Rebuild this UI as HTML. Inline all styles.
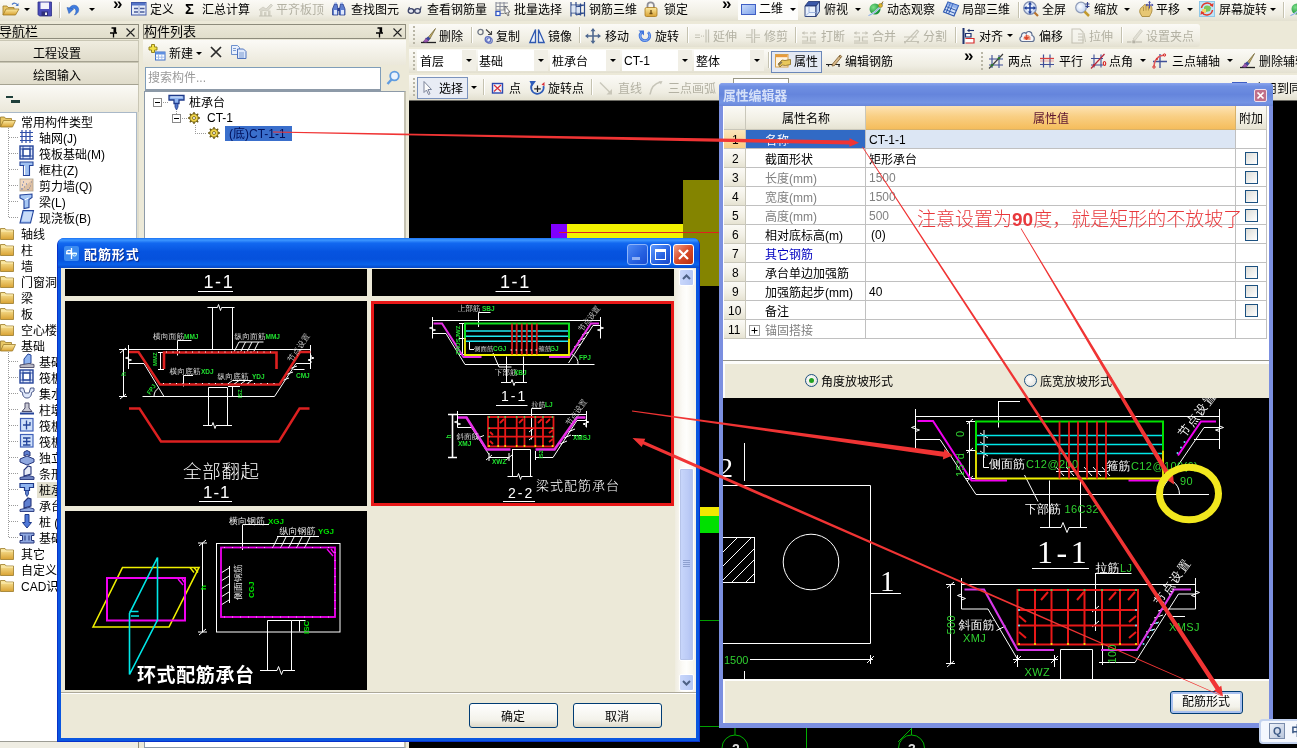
<!DOCTYPE html>
<html lang="zh-CN">
<head>
<meta charset="utf-8">
<title>配筋形式 - 属性编辑器</title>
<style>
*{box-sizing:border-box;margin:0;padding:0}
html,body{width:1297px;height:748px;overflow:hidden}
body{will-change:transform;position:relative;background:#ece9d8;font-family:"Liberation Sans","Noto Sans CJK SC","WenQuanYi Zen Hei",sans-serif;font-size:12px;color:#000;line-height:12px}
.a{position:absolute}
.t{position:absolute;white-space:nowrap;font-size:12px;line-height:14px;height:14px;color:#000}
.g{color:#b3b1a3}
.b{font-weight:bold;font-size:17px;font-family:"Liberation Sans",sans-serif}
.sig{font-weight:bold;font-size:15px;font-family:"Liberation Sans",sans-serif}
.ttl{font-family:"Liberation Sans","Noto Sans CJK SC","WenQuanYi Zen Hei",sans-serif;font-weight:bold}
.ic{position:absolute}
.dd{position:absolute;width:0;height:0;border-left:3px solid transparent;border-right:3px solid transparent;border-top:3px solid #000}
.sep{position:absolute;width:1px;height:16px;background:#c5c2b0;border-right:1px solid #fff;box-sizing:content-box}
.grip{position:absolute;width:3px;height:18px;background-image:radial-gradient(circle at 1px 1px,#b9b6a6 1px,transparent 1.3px);background-size:3px 4px}
.tb{position:absolute;left:0;width:1297px;background:linear-gradient(#fbfaf6,#efede2 70%,#e3e0d0)}
svg{position:absolute;overflow:visible}
.cad{font-family:"Liberation Sans","WenQuanYi Zen Hei","Noto Sans CJK SC",sans-serif}
</style>
</head>
<body>
<svg width="0" height="0" style="position:absolute"><defs>
<linearGradient id="gy" x1="0" y1="0" x2="0" y2="1"><stop offset="0" stop-color="#fbe9a0"/><stop offset="1" stop-color="#d9a233"/></linearGradient>
<linearGradient id="gb" x1="0" y1="0" x2="1" y2="1"><stop offset="0" stop-color="#c9dcfb"/><stop offset="1" stop-color="#7fa2ea"/></linearGradient>
<radialGradient id="gg" cx=".35" cy=".35" r=".7"><stop offset="0" stop-color="#7fe08a"/><stop offset="1" stop-color="#0c8a30"/></radialGradient>
<radialGradient id="gl" cx=".4" cy=".4" r=".7"><stop offset="0" stop-color="#fff"/><stop offset="1" stop-color="#b9cdf0"/></radialGradient>
<g id="i-open"><path d="M1 14V5h4l1 1.500h6V8" fill="#e9c768" stroke="#a07a22" stroke-width=".8"/><path d="M1 14l3-6h13l-3.500 6z" fill="url(#gy)" stroke="#a07a22" stroke-width=".8"/><path d="M10 3.500c2-2 4.500-1.500 5.500.5" fill="none" stroke="#4a78c8" stroke-width="1.200"/><path d="M16.500 2v3h-3z" fill="#4a78c8"/></g>
<g id="i-save"><path d="M1 1h13.500v14H2.500L1 13.500z" fill="#4b4cb9" stroke="#2c2d86" stroke-width=".8"/><rect x="3.500" y="1.500" width="8.500" height="6.500" fill="#f3f3fb"/><rect x="4.500" y="10.500" width="6.500" height="4.500" fill="#2f2f7a"/><rect x="8" y="11.500" width="2" height="2.500" fill="#f0f0f0"/></g>
<g id="i-undo"><path d="M4 8.500C5 3.500 12 2.500 13.500 7.500c.8 3-1.200 5.500-4 6.500 1.500-2 2-4 1-5.500C9.500 6.500 7 7 6.500 9.500" fill="#3f7de0" stroke="#2a5cb8" stroke-width=".6"/><path d="M2 6.500l6.500 1.500L4 12.500z" fill="#3f7de0" stroke="#2a5cb8" stroke-width=".6"/></g>
<g id="i-define"><rect x=".5" y="1.500" width="14.500" height="12.500" fill="#e7edf9" stroke="#3f57a8"/><rect x="1" y="2" width="13.500" height="2.500" fill="#5474c6"/><path d="M3 7.500h4M3 11h4M9 7.500h4.500M9 11h4.500" stroke="#4a5c9a" stroke-width="1.400"/><path d="M8 5v9" stroke="#8a9ac8" stroke-width=".8"/></g>
<g id="i-flat" opacity=".55"><path d="M2 9l4-3 3 2 5-5 1.500 1.500-5 5.500z" fill="#c9c7ba" stroke="#a9a798" stroke-width=".8"/><path d="M3 15V10h2.500v5zM7 15v-4h2.500v4zM11 15V9.500h2.500V15z" fill="#b9b7a8"/><path d="M2 15h13" stroke="#9d9b8c"/></g>
<g id="i-bino"><path d="M1.500 14V8l2-5h2.500l1 5v6zM8.500 14V8l1-5H12l2 5v6z" fill="#5f7fd0" stroke="#2b3f8c" stroke-width=".8"/><path d="M3 9h3v4.500H3zM10 9h3v4.500h-3z" fill="#dfe8fb"/><rect x="6.500" y="7" width="2.500" height="3" fill="#2b3f8c"/><path d="M3.500 3h2.500V1.500H3.500zM9.500 3H12V1.500H9.500z" fill="#9fb4ea"/></g>
<g id="i-glass"><ellipse cx="4" cy="10" rx="2.800" ry="2.300" fill="#e6e8f2" stroke="#3c4468" stroke-width="1.300"/><ellipse cx="10.500" cy="10" rx="2.800" ry="2.300" fill="#e6e8f2" stroke="#3c4468" stroke-width="1.300"/><path d="M6.800 9.500q.6-.8 1.200 0M1.300 9l1.200-3M13.300 9l.8-3.500" fill="none" stroke="#3c4468" stroke-width="1.100"/></g>
<g id="i-batch"><path d="M1 2h12M1 5.500h12M1 9h9M1 12.500h8M1 1v14M5 1v9M9 1v8" stroke="#8b8f9c" stroke-width="1.100" fill="none"/><rect x="1" y="10.500" width="4" height="4" fill="#fff" stroke="#2f55c8" stroke-width="1.200"/><path d="M10 5l5 6-2.200.2 1.200 3-1.300.5-1.300-3L10 13z" fill="#fff" stroke="#555" stroke-width=".8"/></g>
<g id="i-rebar3d"><path d="M2 1v14.500M7 1v13M11.500 2.500v12M15.500 1v14.500M2 4h13.500M2 12h13.500M7 6l8.500-2M7 14l8.500-2" stroke="#2d4a8c" stroke-width="1.200" fill="none"/><path d="M2.500 4.500h4v7h-4zM7.500 6h3.500v6H7.500z" fill="#d8e4f6" opacity=".8"/></g>
<g id="i-lock"><path d="M4.500 7V4.500a3.200 3.200 0 016.400 0V7" fill="none" stroke="#8f8f96" stroke-width="1.800"/><rect x="2" y="6.500" width="12" height="9" rx="1.500" fill="url(#gy)" stroke="#a8791c" stroke-width=".8"/><path d="M8 9v4M6.500 12.500h3" stroke="#6b4a10" stroke-width="1.300"/></g>
<g id="i-twod"><rect x=".5" y="2.500" width="14" height="10" fill="url(#gb)" stroke="#3f5fc4"/></g>
<g id="i-cube"><path d="M1 5l3.500-4.500h11L12 5z" fill="#3a58a8" stroke="#1f3370" stroke-width=".8"/><path d="M1 5h11v10.500H1z" fill="#e9f1fc" stroke="#1f3370" stroke-width=".9"/><path d="M12 5l3.500-4.500v10L12 15.500z" fill="#b8cdf0" stroke="#1f3370" stroke-width=".9"/><path d="M1 15.500l4-4h7M5 11.500V5" stroke="#8fa8d8" stroke-width=".8" fill="none"/></g>
<g id="i-globe"><circle cx="7" cy="8" r="5.500" fill="url(#gg)"/><path d="M.500 14.500C4 13.500 11 9 15 2" fill="none" stroke="#dfe9fb" stroke-width="1.600"/><path d="M.500 14.500C4 13.500 11 9 15 2" fill="none" stroke="#4a78c8" stroke-width=".6"/><circle cx="12.500" cy="4.500" r="2" fill="#d8b12c" stroke="#8a6a14" stroke-width=".5"/><path d="M13.500 3l1.500-2.500" stroke="#8a6a14" stroke-width="1"/></g>
<g id="i-local3d"><path d="M5 1l10.500 3.500-4.500 10.500L.500 11z" fill="#cfe0f8" stroke="#2f58b0" stroke-width="1.100"/><path d="M10 2.500L5.500 13M3 5.500l10.500 4M2 8.500l10 3.800M7.500 1.800L3 12" stroke="#2f58b0" stroke-width="1" fill="none"/><path d="M5 1l10.500 3.500-1.500 3.500L3.500 4z" fill="#5f8ae0" opacity=".55"/></g>
<g id="i-full"><circle cx="7" cy="7" r="6.300" fill="url(#gl)" stroke="#7f8db0" stroke-width="1.200"/><path d="M7 2v10M2 7h10" stroke="#1f3f9a" stroke-width="1.500"/><path d="M7 .800l2 2.700H5zM7 13.200l2-2.700H5zM.800 7l2.700-2v4zM13.200 7l-2.700-2v4z" fill="#1f3f9a"/><path d="M11.500 11.500l3.500 3.500" stroke="#b8732c" stroke-width="2.200"/></g>
<g id="i-zoom"><circle cx="6" cy="6.500" r="5.300" fill="url(#gl)" stroke="#8f9cb8" stroke-width="1.200"/><path d="M9.500 10.500l4.500 4.500" stroke="#c39a2c" stroke-width="2.500"/><path d="M12.500 1v6M10.500 3h4M10.500 5.500h4" stroke="#2f3f8a" stroke-width="1.100"/></g>
<g id="i-pan"><path d="M2 12c-1-3 1-6 3-6.500l1.500-2 1.500.5 1.500-.5 1.500 1 1.500 0c2 2 2 6 0 9l-1 2H4z" fill="#e7c774" stroke="#a98a3c" stroke-width=".9"/><path d="M5.500 6v4M8 5v4.500M10.500 5.500v4" stroke="#a98a3c" stroke-width=".8"/><path d="M11.500 .500v7M8 4h7" stroke="#4a4fa8" stroke-width="1.100"/><path d="M11.500 0l1.500 1.800h-3zM15.500 4l-1.800 1.500v-3zM7.500 4l1.800 1.500v-3z" fill="#4a4fa8"/></g>
<g id="i-srot"><rect x=".5" y=".5" width="15" height="15" fill="#bfe3f6" stroke="#8fc8e8"/><path d="M5 6c2-2 6-2 7 1l-1 3-4 1-2-2z" fill="#7fc85a"/><path d="M3 8h4v4H3z" fill="#f2d66a"/><path d="M2.500 7A5.800 5.800 0 0113 4.500M13.500 9A5.800 5.800 0 013 11.500" fill="none" stroke="#e0382c" stroke-width="1.500"/><path d="M14.500 2l-.5 4-3.200-1.500zM1.500 14l.5-4 3.200 1.500z" fill="#e0382c"/></g>
<g id="i-brush"><path d="M1 14.500h15" stroke="#222" stroke-width="1.300"/><path d="M15.500 .500L8 9.500l1.800 1.500z" fill="#c9b46a" stroke="#6b5f30" stroke-width=".7"/><path d="M8.200 8.500l2.300 2-2 2.500-3-2.500z" fill="#3b4a9a"/><path d="M5.800 10.200l2.800 2.500c-1.500 2-4 2-5.500.800 1.500-.500 2-1.800 2.700-3.300z" fill="#9c5ab0" stroke="#5c2f78" stroke-width=".6"/></g>
<g id="i-copy"><circle cx="3.500" cy="4" r="2.600" fill="none" stroke="#6f7684" stroke-width="1.300"/><circle cx="11" cy="11.500" r="2.800" fill="#e6ebfa" stroke="#5f70c0" stroke-width="1.300"/><circle cx="12.500" cy="12.500" r="2.800" fill="none" stroke="#5f70c0" stroke-width="1.100"/><path d="M9 1.500l5 4.500M14.500 3v3.500H11" fill="none" stroke="#444" stroke-width="1.100"/></g>
<g id="i-mirror"><path d="M6.500 1.500v13H.800zM9.500 1.500v13h5.700z" fill="#eef3fc" stroke="#2f58b0" stroke-width="1.300"/></g>
<g id="i-move"><path d="M8 1.500v13M1.500 8h13" stroke="#4f6890" stroke-width="1.600"/><path d="M8 0l2.500 3.200h-5zM8 16l2.500-3.200h-5zM0 8l3.200-2.500v5zM16 8l-3.200-2.500v5z" fill="#4f6890"/></g>
<g id="i-rot"><path d="M3.500 4.500A4.800 4.800 0 1010 4.200" fill="none" stroke="#3f74dc" stroke-width="2.800"/><path d="M.500 2.500h5.500v5z" fill="#3f74dc"/><path d="M3.500 4.500A4.800 4.800 0 1010 4.200" fill="none" stroke="#8fb4f4" stroke-width=".9"/></g>
<g id="i-extend" opacity=".6"><path d="M1 7h5M1 9.500h5M12 1.500v13M14.500 1.500v13" stroke="#a9a798" stroke-width="1.200"/><path d="M7 8.200h4" stroke="#a9a798" stroke-dasharray="1 1" stroke-width="1.200"/></g>
<g id="i-trim" opacity=".6"><path d="M1 7h14M1 9.500h14" stroke="#a9a798" stroke-width="1.100"/><path d="M7 1v14M9.500 1v14" stroke="#a9a798" stroke-width="1.300"/><rect x="7.600" y="6" width="1.400" height="4.500" fill="#f4f2ea"/></g>
<g id="i-break" opacity=".6"><path d="M1 9h5.500v4H1M15 9H9.500v4H15M1 15h14" fill="none" stroke="#a9a798" stroke-width="1.200"/><path d="M1 5h6M15 5H9" stroke="#a9a798" stroke-width="1.200"/><path d="M1 5l2.500-2v4zM15 5l-2.500-2v4z" fill="#a9a798"/></g>
<g id="i-split" opacity=".6"><path d="M1 9h13M1 13.500h15M3 13.500L14 2l1.500 1.500-8 10" fill="none" stroke="#a9a798" stroke-width="1.200"/><circle cx="2" cy="14.500" r="1" fill="#a9a798"/><circle cx="15" cy="14.500" r="1" fill="#a9a798"/></g>
<g id="i-align"><path d="M1.500 0v16" stroke="#1f3370" stroke-width="2"/><path d="M3.500 5.500h5.500v3.500H3.500z" fill="#fff" stroke="#1f3370" stroke-width="1.200"/><path d="M3.500 10.500h8.500v4.500H3.500" fill="#fff" stroke="#d82c2c" stroke-width="1.200"/><path d="M12 2.500H6" stroke="#1f3370" stroke-width="1.100"/><path d="M5 2.500l2.500-1.800v3.600z" fill="#1f3370"/></g>
<g id="i-cloud"><path d="M3.500 13.500C.500 13.500 0 9.500 2.500 8.500 2 5 5.500 3.500 7 5.500 8.500 2 13.500 3.500 13 7.500c3 .500 3 6 0 6z" fill="#f4f6fb" stroke="#5f6f90" stroke-width="1.200"/><path d="M4.500 11.500c-.500-3 2.500-5.500 5.500-4l1.500 1.500v3z" fill="#f0947c"/><path d="M7.500 6.500v5M5.500 9.500l2 2.500 2-2.500z" fill="#d8432c" stroke="#d8432c" stroke-width=".8"/></g>
<g id="i-stretch" opacity=".6"><path d="M1 1h8l3 3v11H1z" fill="#f6f5ee" stroke="#a9a798" stroke-width="1.100"/><path d="M7 6h4M7 9h5M7 12h6M13 5l1.500 9" stroke="#a9a798" stroke-width="1" fill="none"/></g>
<g id="i-grippt" opacity=".6"><path d="M0 14h4.500M8.500 14H15" stroke="#8f8d80" stroke-width="1.200"/><rect x="5.300" y="12.300" width="3" height="3" fill="#8f8d80"/><path d="M6 11L13.500 1.500l2 1.500L8 12.500z" fill="#d6d4c8" stroke="#b4b2a4" stroke-width=".8"/></g>
<g id="i-prop"><rect x=".5" y="1.500" width="12.500" height="12.500" fill="#fff6e4" stroke="#d8a34c" stroke-width="1"/><rect x="1" y="2" width="11.500" height="2.200" fill="#e89a3c"/><path d="M3 11l4-4 3 .500 5.500-1v5l-5 1-3.500-.500-2 2z" fill="#e9c85c" stroke="#8a6a1c" stroke-width=".8"/><path d="M3 11l3-3 1.500 1.500-3 3z" fill="#8a7a5a"/></g>
<g id="i-editrebar"><path d="M0 11.500h14M2.500 11.500v2M13 11.500v2.500" stroke="#222" stroke-width="1.200"/><path d="M6.500 11L14 2l1.800 1.500L8.500 12.500 6 13z" fill="#d8b98a" stroke="#7a5c2c" stroke-width=".8"/><path d="M13 3.200l1.800 1.500" stroke="#7a5c2c"/></g>
<g id="i-twopt"><path d="M4 2v13M11 2v13M1 6h14M1 12h14" stroke="#3f4f98" stroke-width="1.100"/><path d="M1 15.500L15 1" stroke="#3a3a3a" stroke-width="1.100"/><circle cx="4" cy="12.300" r="1.300" fill="#2c7a2c"/><circle cx="11" cy="5.200" r="1.300" fill="#2c7a2c"/></g>
<g id="i-parallel"><path d="M4.500 1.500v13M11 1.500v13M1 11.500h14" stroke="#3f4f98" stroke-width="1.200"/><path d="M1 5.500h14" stroke="#d84040" stroke-width="1.300"/><path d="M1 8h14" stroke="#d84040" stroke-width=".7" opacity=".6"/></g>
<g id="i-ptangle"><path d="M4 1.500v13M11 1.500v13M1 5.500h12M1 12h12" stroke="#3f4f98" stroke-width="1.100"/><path d="M1 15.500L14.500 1" stroke="#b8283a" stroke-width="1.200"/><ellipse cx="14.500" cy="10.500" rx="1.200" ry="2" fill="none" stroke="#d82c2c" stroke-width="1.200"/><circle cx="4" cy="12.300" r="1.200" fill="#b8283a"/></g>
<g id="i-threept"><path d="M8 1v14M1 8.500h14" stroke="#3f4f98" stroke-width="1.300"/><path d="M2 13.500C2 7 6 2.500 12.500 2" fill="none" stroke="#e05a5a" stroke-width="1.300"/><circle cx="2" cy="14" r="1.200" fill="none" stroke="#d82c2c"/><circle cx="12.500" cy="2" r="1.200" fill="none" stroke="#d82c2c"/><circle cx="5" cy="6" r="1" fill="#d82c2c"/></g>
<g id="i-cursor"><path d="M3 1.500v11l2.500-2.500 2 4.500 1.500-.700-2-4.300H10.500z" fill="#fbfbfb" stroke="#6f7890" stroke-width=".9"/></g>
<g id="i-xbox"><rect x="2.500" y="3.500" width="10" height="9.500" fill="#f4f6fc" stroke="#2c48b0" stroke-width="1.400"/><path d="M4 5l7 6.500M11 5l-7 6.500" stroke="#d8303a" stroke-width="1.200"/></g>
<g id="i-rotpt"><path d="M3.500 3.500A6.300 6.300 0 1014.500 6" fill="none" stroke="#2f5cb8" stroke-width="1.700"/><path d="M.500 1h6.500L3 6.500z" fill="#2f5cb8"/><path d="M12.500 4.500l3-2.500v4z" fill="#d8303a"/><path d="M8.500 5.500v6.500M5.200 8.800h6.600" stroke="#222" stroke-width="1.200"/></g>
<g id="i-line" opacity=".7"><path d="M2 2.500l10.500 10.500" stroke="#b9b7a8" stroke-width="1.400"/><path d="M14 14.500H8.500L14 9z" fill="#b9b7a8"/></g>
<g id="i-arc" opacity=".7"><path d="M2 14.500C3 8 6 3.500 12.500 2" fill="none" stroke="#b4b2a4" stroke-width="1.600"/><path d="M14.500 1l-4 .500 2.500 3z" fill="#b4b2a4"/></g>
</defs></svg>
<div class="tb" style="top:0;height:21px"></div>
<div class="tb" style="top:24px;left:409px;width:791px;height:23px;border-radius:0 3px 3px 0"></div>
<div class="tb" style="top:49px;left:409px;width:888px;height:24px"></div>
<div class="tb" style="top:75px;left:409px;width:888px;height:25px"></div>
<svg class="ic" style="left:2px;top:1px" width="19" height="16" viewBox="0 0 19 16"><use href="#i-open"/></svg>
<i class="dd" style="left:24px;top:8px"></i>
<svg class="ic" style="left:37px;top:1px" width="16" height="16" viewBox="0 0 16 16"><use href="#i-save"/></svg>
<i class="sep" style="left:59px;top:2px"></i>
<svg class="ic" style="left:65px;top:1px" width="16" height="16" viewBox="0 0 16 16"><use href="#i-undo"/></svg>
<i class="dd" style="left:89px;top:8px"></i>
<span class="t b" style="left:113px;top:-3px">»</span>
<svg class="ic" style="left:131px;top:1px" width="16" height="16" viewBox="0 0 16 16"><use href="#i-define"/></svg>
<span class="t " style="left:150px;top:3px">定义</span>
<span class="t sig" style="left:185px;top:2px">Σ</span>
<span class="t " style="left:202px;top:3px">汇总计算</span>
<svg class="ic" style="left:257px;top:1px" width="16" height="16" viewBox="0 0 16 16"><use href="#i-flat"/></svg>
<span class="t g" style="left:276px;top:3px">平齐板顶</span>
<svg class="ic" style="left:331px;top:1px" width="16" height="16" viewBox="0 0 16 16"><use href="#i-bino"/></svg>
<span class="t " style="left:351px;top:3px">查找图元</span>
<svg class="ic" style="left:407px;top:1px" width="16" height="16" viewBox="0 0 16 16"><use href="#i-glass"/></svg>
<span class="t " style="left:427px;top:3px">查看钢筋量</span>
<svg class="ic" style="left:495px;top:1px" width="16" height="16" viewBox="0 0 16 16"><use href="#i-batch"/></svg>
<span class="t " style="left:514px;top:3px">批量选择</span>
<svg class="ic" style="left:569px;top:1px" width="16" height="16" viewBox="0 0 16 16"><use href="#i-rebar3d"/></svg>
<span class="t " style="left:589px;top:3px">钢筋三维</span>
<svg class="ic" style="left:643px;top:1px" width="16" height="16" viewBox="0 0 16 16"><use href="#i-lock"/></svg>
<span class="t " style="left:664px;top:3px">锁定</span>
<span class="t b" style="left:722px;top:-3px">»</span>
<div class="a" style="left:738px;top:0;width:60px;height:20px;background:#fdfdfb"></div>
<svg class="ic" style="left:741px;top:2px" width="16" height="16" viewBox="0 0 16 16"><use href="#i-twod"/></svg>
<span class="t " style="left:759px;top:2px">二维</span>
<i class="dd" style="left:790px;top:8px"></i>
<svg class="ic" style="left:804px;top:1px" width="16" height="16" viewBox="0 0 16 16"><use href="#i-cube"/></svg>
<span class="t " style="left:824px;top:3px">俯视</span>
<i class="dd" style="left:855px;top:8px"></i>
<svg class="ic" style="left:868px;top:1px" width="16" height="16" viewBox="0 0 16 16"><use href="#i-globe"/></svg>
<span class="t " style="left:887px;top:3px">动态观察</span>
<svg class="ic" style="left:943px;top:1px" width="16" height="16" viewBox="0 0 16 16"><use href="#i-local3d"/></svg>
<span class="t " style="left:962px;top:3px">局部三维</span>
<i class="sep" style="left:1018px;top:2px"></i>
<svg class="ic" style="left:1023px;top:1px" width="16" height="16" viewBox="0 0 16 16"><use href="#i-full"/></svg>
<span class="t " style="left:1042px;top:3px">全屏</span>
<svg class="ic" style="left:1075px;top:1px" width="16" height="16" viewBox="0 0 16 16"><use href="#i-zoom"/></svg>
<span class="t " style="left:1094px;top:3px">缩放</span>
<i class="dd" style="left:1124px;top:8px"></i>
<svg class="ic" style="left:1138px;top:1px" width="16" height="16" viewBox="0 0 16 16"><use href="#i-pan"/></svg>
<span class="t " style="left:1156px;top:3px">平移</span>
<i class="dd" style="left:1187px;top:8px"></i>
<svg class="ic" style="left:1199px;top:1px" width="16" height="16" viewBox="0 0 16 16"><use href="#i-srot"/></svg>
<span class="t " style="left:1219px;top:3px">屏幕旋转</span>
<i class="dd" style="left:1270px;top:8px"></i>
<i class="sep" style="left:1283px;top:2px"></i>
<svg class="ic" style="left:1290px;top:1px" width="16" height="16" viewBox="0 0 16 16"><use href="#i-globe"/></svg>
<i class="grip" style="left:413px;top:26px"></i>
<svg class="ic" style="left:420px;top:28px" width="16" height="16" viewBox="0 0 16 16"><use href="#i-brush"/></svg>
<span class="t " style="left:439px;top:30px">删除</span>
<i class="sep" style="left:471px;top:27px"></i>
<svg class="ic" style="left:477px;top:28px" width="16" height="16" viewBox="0 0 16 16"><use href="#i-copy"/></svg>
<span class="t " style="left:496px;top:30px">复制</span>
<svg class="ic" style="left:529px;top:28px" width="16" height="16" viewBox="0 0 16 16"><use href="#i-mirror"/></svg>
<span class="t " style="left:548px;top:30px">镜像</span>
<i class="sep" style="left:579px;top:27px"></i>
<svg class="ic" style="left:585px;top:28px" width="16" height="16" viewBox="0 0 16 16"><use href="#i-move"/></svg>
<span class="t " style="left:605px;top:30px">移动</span>
<svg class="ic" style="left:638px;top:28px" width="16" height="16" viewBox="0 0 16 16"><use href="#i-rot"/></svg>
<span class="t " style="left:655px;top:30px">旋转</span>
<i class="sep" style="left:687px;top:27px"></i>
<svg class="ic" style="left:694px;top:28px" width="16" height="16" viewBox="0 0 16 16"><use href="#i-extend"/></svg>
<span class="t g" style="left:713px;top:30px">延伸</span>
<svg class="ic" style="left:745px;top:28px" width="16" height="16" viewBox="0 0 16 16"><use href="#i-trim"/></svg>
<span class="t g" style="left:764px;top:30px">修剪</span>
<i class="sep" style="left:795px;top:27px"></i>
<svg class="ic" style="left:801px;top:28px" width="16" height="16" viewBox="0 0 16 16"><use href="#i-break"/></svg>
<span class="t g" style="left:821px;top:30px">打断</span>
<svg class="ic" style="left:853px;top:28px" width="16" height="16" viewBox="0 0 16 16"><use href="#i-break"/></svg>
<span class="t g" style="left:872px;top:30px">合并</span>
<svg class="ic" style="left:903px;top:28px" width="16" height="16" viewBox="0 0 16 16"><use href="#i-split"/></svg>
<span class="t g" style="left:923px;top:30px">分割</span>
<i class="sep" style="left:955px;top:27px"></i>
<svg class="ic" style="left:962px;top:28px" width="16" height="16" viewBox="0 0 16 16"><use href="#i-align"/></svg>
<span class="t " style="left:979px;top:30px">对齐</span>
<i class="dd" style="left:1007px;top:34px"></i>
<svg class="ic" style="left:1019px;top:28px" width="16" height="16" viewBox="0 0 16 16"><use href="#i-cloud"/></svg>
<span class="t " style="left:1039px;top:30px">偏移</span>
<svg class="ic" style="left:1071px;top:28px" width="16" height="16" viewBox="0 0 16 16"><use href="#i-stretch"/></svg>
<span class="t g" style="left:1089px;top:30px">拉伸</span>
<i class="sep" style="left:1121px;top:27px"></i>
<svg class="ic" style="left:1127px;top:28px" width="16" height="16" viewBox="0 0 16 16"><use href="#i-grippt"/></svg>
<span class="t g" style="left:1146px;top:30px">设置夹点</span>
<i class="grip" style="left:413px;top:52px"></i>
<div class="a" style="left:417px;top:50px;width:59px;height:21px;background:#fff"></div>
<div class="a" style="left:462px;top:50px;width:14px;height:21px;background:#f1efe6"></div>
<span class="t " style="left:420px;top:55px">首层</span>
<i class="dd" style="left:466px;top:59px"></i>
<div class="a" style="left:478px;top:50px;width:70px;height:21px;background:#fff"></div>
<div class="a" style="left:534px;top:50px;width:14px;height:21px;background:#f1efe6"></div>
<span class="t " style="left:479px;top:55px">基础</span>
<i class="dd" style="left:538px;top:59px"></i>
<div class="a" style="left:550px;top:50px;width:70px;height:21px;background:#fff"></div>
<div class="a" style="left:606px;top:50px;width:14px;height:21px;background:#f1efe6"></div>
<span class="t " style="left:552px;top:55px">桩承台</span>
<i class="dd" style="left:610px;top:59px"></i>
<div class="a" style="left:622px;top:50px;width:70px;height:21px;background:#fff"></div>
<div class="a" style="left:678px;top:50px;width:14px;height:21px;background:#f1efe6"></div>
<span class="t " style="left:624px;top:54px">CT-1</span>
<i class="dd" style="left:682px;top:59px"></i>
<div class="a" style="left:694px;top:50px;width:70px;height:21px;background:#fff"></div>
<div class="a" style="left:750px;top:50px;width:14px;height:21px;background:#f1efe6"></div>
<span class="t " style="left:696px;top:55px">整体</span>
<i class="dd" style="left:754px;top:59px"></i>
<i class="sep" style="left:768px;top:52px"></i>
<div class="a" style="left:771px;top:51px;width:51px;height:22px;background:#e4e9f3;border:1px solid #6b87b8"></div>
<svg class="ic" style="left:775px;top:53px" width="16" height="16" viewBox="0 0 16 16"><use href="#i-prop"/></svg>
<span class="t " style="left:794px;top:55px">属性</span>
<svg class="ic" style="left:826px;top:53px" width="16" height="16" viewBox="0 0 16 16"><use href="#i-editrebar"/></svg>
<span class="t " style="left:845px;top:55px">编辑钢筋</span>
<span class="t b" style="left:964px;top:49px">»</span>
<i class="grip" style="left:981px;top:52px"></i>
<svg class="ic" style="left:988px;top:53px" width="16" height="16" viewBox="0 0 16 16"><use href="#i-twopt"/></svg>
<span class="t " style="left:1008px;top:55px">两点</span>
<svg class="ic" style="left:1039px;top:53px" width="16" height="16" viewBox="0 0 16 16"><use href="#i-parallel"/></svg>
<span class="t " style="left:1059px;top:55px">平行</span>
<svg class="ic" style="left:1090px;top:53px" width="16" height="16" viewBox="0 0 16 16"><use href="#i-ptangle"/></svg>
<span class="t " style="left:1109px;top:55px">点角</span>
<i class="dd" style="left:1140px;top:59px"></i>
<svg class="ic" style="left:1152px;top:53px" width="16" height="16" viewBox="0 0 16 16"><use href="#i-threept"/></svg>
<span class="t " style="left:1172px;top:55px">三点辅轴</span>
<i class="dd" style="left:1227px;top:59px"></i>
<svg class="ic" style="left:1239px;top:53px" width="16" height="16" viewBox="0 0 16 16"><use href="#i-brush"/></svg>
<span class="t " style="left:1259px;top:55px">删除辅轴</span>
<i class="grip" style="left:413px;top:78px"></i>
<div class="a" style="left:417px;top:77px;width:51px;height:22px;background:#e8ecf5;border:1px solid #7b93bd"></div>
<svg class="ic" style="left:421px;top:80px" width="16" height="16" viewBox="0 0 16 16"><use href="#i-cursor"/></svg>
<span class="t " style="left:439px;top:82px">选择</span>
<i class="dd" style="left:471px;top:86px"></i>
<i class="sep" style="left:483px;top:79px"></i>
<svg class="ic" style="left:490px;top:80px" width="16" height="16" viewBox="0 0 16 16"><use href="#i-xbox"/></svg>
<span class="t " style="left:509px;top:82px">点</span>
<svg class="ic" style="left:529px;top:80px" width="16" height="16" viewBox="0 0 16 16"><use href="#i-rotpt"/></svg>
<span class="t " style="left:548px;top:82px">旋转点</span>
<i class="sep" style="left:591px;top:79px"></i>
<svg class="ic" style="left:598px;top:80px" width="16" height="16" viewBox="0 0 16 16"><use href="#i-line"/></svg>
<span class="t g" style="left:618px;top:82px">直线</span>
<svg class="ic" style="left:648px;top:80px" width="16" height="16" viewBox="0 0 16 16"><use href="#i-arc"/></svg>
<span class="t g" style="left:668px;top:82px">三点画弧</span>
<div class="a" style="left:733px;top:78px;width:56px;height:20px;background:#fff;border:1px solid #9a9886"></div>
<svg class="ic" style="left:1232px;top:80px" width="16" height="16" viewBox="0 0 16 16"><use href="#i-twod"/></svg>
<span class="t " style="left:1253px;top:82px">应用到同名承台</span>
<div class="a" style="left:0;top:21px;width:409px;height:727px;background:#ece9d8"></div>
<div class="a" style="left:0;top:24px;width:139px;height:15px;background:linear-gradient(#ebe8d8,#e1decb);border:1px solid #8d8b7b;border-left:none"></div>
<span class="t " style="left:-1px;top:25px;font-size:13px">导航栏</span>
<svg style="left:109px;top:27px" width="9" height="11" viewBox="0 0 9 11"><path d="M2.500 1h4v4.500M1 6h7M4.500 6v4.500" fill="none" stroke="#000" stroke-width="1.300"/><path d="M5.500 1v4.500" stroke="#000" stroke-width="2"/></svg>
<svg style="left:126px;top:28px" width="9" height="9" viewBox="0 0 9 9"><path d="M.500 .500l8 8M8.500 .500l-8 8" stroke="#222" stroke-width="1.100"/></svg>
<div class="a" style="left:0;top:40px;width:139px;height:22px;background:linear-gradient(#efecdf,#e0dccb);border:1px solid #c9c6b4;border-left:none;border-bottom-color:#a5a291"></div>
<span class="t " style="left:33px;top:47px;">工程设置</span>
<div class="a" style="left:0;top:62px;width:139px;height:23px;background:linear-gradient(#efecdf,#e0dccb);border:1px solid #c9c6b4;border-left:none;border-bottom-color:#a5a291"></div>
<span class="t " style="left:33px;top:69px;">绘图输入</span>
<div class="a" style="left:0;top:85px;width:139px;height:27px;background:linear-gradient(#fbfaf6,#ebe8da);border-right:1px solid #c9c6b4"></div>
<div class="a" style="left:6px;top:96px;width:7px;height:2px;background:#1f3f3a"></div><div class="a" style="left:11px;top:100px;width:9px;height:3px;background:#1f3f3a"></div>
<div class="a" style="left:0;top:112px;width:137px;height:636px;background:#fff;border-top:1px solid #a9b8c8;border-right:1px solid #a9b8c8"></div>
<div class="a" style="left:137px;top:112px;width:2px;height:636px;background:#dfdccb"></div>
<div class="a" style="left:8px;top:128px;width:1px;height:90px;background-image:linear-gradient(#9a9a9a 50%,transparent 50%);background-size:1px 2px"></div>
<div class="a" style="left:8px;top:352px;width:1px;height:186px;background-image:linear-gradient(#9a9a9a 50%,transparent 50%);background-size:1px 2px"></div>
<svg style="left:0px;top:115px" width="16" height="13" viewBox="0 0 16 13"><path d="M.500 12V2h4l1 1.500h6V5" fill="#e8c766" stroke="#9a7a28" stroke-width=".8"/><path d="M.500 12l3-6.500h12l-3 6.500z" fill="url(#gy)" stroke="#9a7a28" stroke-width=".8"/></svg>
<span class="t " style="left:21px;top:116px;">常用构件类型</span>
<div class="a" style="left:9px;top:137px;width:10px;height:1px;background-image:linear-gradient(90deg,#9a9a9a 50%,transparent 50%);background-size:2px 1px"></div>
<svg style="left:19px;top:129px" width="16" height="16" viewBox="0 0 16 16"><path d="M3 1v13M7 1v13M11 1v13M1 3.500h13M1 7.500h13M1 11.500h13" stroke="#2f4fa8" stroke-width="1.200"/></svg>
<span class="t " style="left:39px;top:132px;">轴网(J)</span>
<div class="a" style="left:9px;top:153px;width:10px;height:1px;background-image:linear-gradient(90deg,#9a9a9a 50%,transparent 50%);background-size:2px 1px"></div>
<svg style="left:19px;top:145px" width="16" height="16" viewBox="0 0 16 16"><rect x="1" y="1" width="13" height="13" fill="#dfe8fb" stroke="#24449a" stroke-width="1.400"/><rect x="4" y="4" width="7" height="7" fill="#fff" stroke="#24449a" stroke-width="1.200"/><path d="M1 4h13M1 11h13M4 1v13M11 1v13" stroke="#24449a" stroke-width=".8"/></svg>
<span class="t " style="left:39px;top:148px;">筏板基础(M)</span>
<div class="a" style="left:9px;top:169px;width:10px;height:1px;background-image:linear-gradient(90deg,#9a9a9a 50%,transparent 50%);background-size:2px 1px"></div>
<svg style="left:19px;top:161px" width="16" height="16" viewBox="0 0 16 16"><path d="M1 1h13v3.500H10.500V14.500H4.500V4.500H1z" fill="#9fc0f0" stroke="#24449a" stroke-width="1.100"/><path d="M5.500 5v9" stroke="#fff" stroke-width="1.200"/></svg>
<span class="t " style="left:39px;top:164px;">框柱(Z)</span>
<div class="a" style="left:9px;top:185px;width:10px;height:1px;background-image:linear-gradient(90deg,#9a9a9a 50%,transparent 50%);background-size:2px 1px"></div>
<svg style="left:19px;top:177px" width="16" height="16" viewBox="0 0 16 16"><rect x="1" y="2" width="13" height="12" fill="#f2d8c0" stroke="#a9a08c" stroke-width=".8"/><path d="M2 12h2M5 10h1M8 12.500h2M11 9h1M3 8h1M7 7h1M10 11h1M12 5h1M4 5h1" stroke="#4f68b0" stroke-width="1.200"/><path d="M1 14l13-12v12z" fill="#c8a888" opacity=".5"/></svg>
<span class="t " style="left:39px;top:180px;">剪力墙(Q)</span>
<div class="a" style="left:9px;top:201px;width:10px;height:1px;background-image:linear-gradient(90deg,#9a9a9a 50%,transparent 50%);background-size:2px 1px"></div>
<svg style="left:19px;top:193px" width="16" height="16" viewBox="0 0 16 16"><path d="M1 2l12-1v3.500L10 6.500v8L5 15.500V7L1 5z" fill="#a8c8f4" stroke="#24449a" stroke-width="1.100"/><path d="M5.500 7l4-2" stroke="#fff"/></svg>
<span class="t " style="left:39px;top:196px;">梁(L)</span>
<div class="a" style="left:9px;top:217px;width:10px;height:1px;background-image:linear-gradient(90deg,#9a9a9a 50%,transparent 50%);background-size:2px 1px"></div>
<svg style="left:19px;top:209px" width="16" height="16" viewBox="0 0 16 16"><path d="M4 1.500h10.500L11.500 14H1z" fill="#8fb4f0" stroke="#24449a" stroke-width="1.100"/><path d="M5 3h8.500L11 12.500H2.500z" fill="#c9dcf8"/></svg>
<span class="t " style="left:39px;top:212px;">现浇板(B)</span>
<svg style="left:0px;top:227px" width="15" height="13" viewBox="0 0 15 13"><path d="M.500 12.500V1.500h4.500l1.200 1.500H13.500v9.500z" fill="url(#gy)" stroke="#9a7a28" stroke-width=".8"/><path d="M1 4h12" stroke="#fbeeb8" stroke-width="1"/></svg>
<span class="t " style="left:21px;top:228px;">轴线</span>
<svg style="left:0px;top:243px" width="15" height="13" viewBox="0 0 15 13"><path d="M.500 12.500V1.500h4.500l1.200 1.500H13.500v9.500z" fill="url(#gy)" stroke="#9a7a28" stroke-width=".8"/><path d="M1 4h12" stroke="#fbeeb8" stroke-width="1"/></svg>
<span class="t " style="left:21px;top:244px;">柱</span>
<svg style="left:0px;top:259px" width="15" height="13" viewBox="0 0 15 13"><path d="M.500 12.500V1.500h4.500l1.200 1.500H13.500v9.500z" fill="url(#gy)" stroke="#9a7a28" stroke-width=".8"/><path d="M1 4h12" stroke="#fbeeb8" stroke-width="1"/></svg>
<span class="t " style="left:21px;top:260px;">墙</span>
<svg style="left:0px;top:275px" width="15" height="13" viewBox="0 0 15 13"><path d="M.500 12.500V1.500h4.500l1.200 1.500H13.500v9.500z" fill="url(#gy)" stroke="#9a7a28" stroke-width=".8"/><path d="M1 4h12" stroke="#fbeeb8" stroke-width="1"/></svg>
<span class="t " style="left:21px;top:276px;">门窗洞</span>
<svg style="left:0px;top:291px" width="15" height="13" viewBox="0 0 15 13"><path d="M.500 12.500V1.500h4.500l1.200 1.500H13.500v9.500z" fill="url(#gy)" stroke="#9a7a28" stroke-width=".8"/><path d="M1 4h12" stroke="#fbeeb8" stroke-width="1"/></svg>
<span class="t " style="left:21px;top:292px;">梁</span>
<svg style="left:0px;top:307px" width="15" height="13" viewBox="0 0 15 13"><path d="M.500 12.500V1.500h4.500l1.200 1.500H13.500v9.500z" fill="url(#gy)" stroke="#9a7a28" stroke-width=".8"/><path d="M1 4h12" stroke="#fbeeb8" stroke-width="1"/></svg>
<span class="t " style="left:21px;top:308px;">板</span>
<svg style="left:0px;top:323px" width="15" height="13" viewBox="0 0 15 13"><path d="M.500 12.500V1.500h4.500l1.200 1.500H13.500v9.500z" fill="url(#gy)" stroke="#9a7a28" stroke-width=".8"/><path d="M1 4h12" stroke="#fbeeb8" stroke-width="1"/></svg>
<span class="t " style="left:21px;top:324px;">空心楼盖</span>
<svg style="left:0px;top:339px" width="16" height="13" viewBox="0 0 16 13"><path d="M.500 12V2h4l1 1.500h6V5" fill="#e8c766" stroke="#9a7a28" stroke-width=".8"/><path d="M.500 12l3-6.500h12l-3 6.500z" fill="url(#gy)" stroke="#9a7a28" stroke-width=".8"/></svg>
<span class="t " style="left:21px;top:340px;">基础</span>
<div class="a" style="left:9px;top:361px;width:10px;height:1px;background-image:linear-gradient(90deg,#9a9a9a 50%,transparent 50%);background-size:2px 1px"></div>
<svg style="left:19px;top:353px" width="16" height="16" viewBox="0 0 16 16"><path d="M5 14V6l4-5 3 1v8z" fill="#8fb4f0" stroke="#24449a" stroke-width="1"/><path d="M1 14.500h14v-3l-5-1-9 1.500z" fill="#b8b8c4" stroke="#4a4a68" stroke-width=".9"/></svg>
<span class="t " style="left:39px;top:356px;">基础梁(F)</span>
<div class="a" style="left:9px;top:377px;width:10px;height:1px;background-image:linear-gradient(90deg,#9a9a9a 50%,transparent 50%);background-size:2px 1px"></div>
<svg style="left:19px;top:369px" width="16" height="16" viewBox="0 0 16 16"><rect x="1" y="1" width="13" height="13" fill="#dfe8fb" stroke="#24449a" stroke-width="1.400"/><rect x="4" y="4" width="7" height="7" fill="#fff" stroke="#24449a" stroke-width="1.200"/><path d="M1 4h13M1 11h13M4 1v13M11 1v13" stroke="#24449a" stroke-width=".8"/></svg>
<span class="t " style="left:39px;top:372px;">筏板基础(M)</span>
<div class="a" style="left:9px;top:393px;width:10px;height:1px;background-image:linear-gradient(90deg,#9a9a9a 50%,transparent 50%);background-size:2px 1px"></div>
<svg style="left:19px;top:385px" width="16" height="16" viewBox="0 0 16 16"><path d="M1 3h3.500l1.500 5h4l1.500-5H15v3l-2.500 1.500c0 4-2 5.500-4.500 5.500S3.500 11.500 3.500 7.500L1 6z" fill="#dfe8fb" stroke="#4a5888" stroke-width="1"/></svg>
<span class="t " style="left:39px;top:388px;">集水坑(K)</span>
<div class="a" style="left:9px;top:409px;width:10px;height:1px;background-image:linear-gradient(90deg,#9a9a9a 50%,transparent 50%);background-size:2px 1px"></div>
<svg style="left:19px;top:401px" width="16" height="16" viewBox="0 0 16 16"><path d="M6 2h4v5l3 3.500H3L6 7z" fill="#c9c9d4" stroke="#4a4a68" stroke-width="1"/><path d="M1 12.500h14" stroke="#24449a" stroke-width="2"/></svg>
<span class="t " style="left:39px;top:404px;">柱墩(Y)</span>
<div class="a" style="left:9px;top:425px;width:10px;height:1px;background-image:linear-gradient(90deg,#9a9a9a 50%,transparent 50%);background-size:2px 1px"></div>
<svg style="left:19px;top:417px" width="16" height="16" viewBox="0 0 16 16"><rect x="1.500" y="1.500" width="12.500" height="12.500" fill="#cfe0fa" stroke="#3f5fb8" stroke-width="1.200"/><path d="M7.500 3.500v9M4 8h7.500M8 8h3v-3" fill="none" stroke="#24449a" stroke-width="1.300"/></svg>
<span class="t " style="left:39px;top:420px;">筏板主筋(R)</span>
<div class="a" style="left:9px;top:441px;width:10px;height:1px;background-image:linear-gradient(90deg,#9a9a9a 50%,transparent 50%);background-size:2px 1px"></div>
<svg style="left:19px;top:433px" width="16" height="16" viewBox="0 0 16 16"><rect x="1.500" y="1.500" width="12.500" height="12.500" fill="#cfe0fa" stroke="#3f5fb8" stroke-width="1.200"/><path d="M4 5h7.500M4 8.500h7.500M4 12h7.500M7.700 5v7" fill="none" stroke="#24449a" stroke-width="1.300"/></svg>
<span class="t " style="left:39px;top:436px;">筏板负筋(X)</span>
<div class="a" style="left:9px;top:457px;width:10px;height:1px;background-image:linear-gradient(90deg,#9a9a9a 50%,transparent 50%);background-size:2px 1px"></div>
<svg style="left:19px;top:449px" width="16" height="16" viewBox="0 0 16 16"><path d="M1 10l7-3 7 3v3l-7 3-7-3z" fill="#8fa8e0" stroke="#24347a" stroke-width="1"/><path d="M5 7l3-1.500 3 1.500v-4L8 1.500 5 3z" fill="#5f7fd0" stroke="#24347a" stroke-width="1"/></svg>
<span class="t " style="left:39px;top:452px;">独立基础(P)</span>
<div class="a" style="left:9px;top:473px;width:10px;height:1px;background-image:linear-gradient(90deg,#9a9a9a 50%,transparent 50%);background-size:2px 1px"></div>
<svg style="left:19px;top:465px" width="16" height="16" viewBox="0 0 16 16"><path d="M5 11V5l4-4 3 1v7z" fill="#e8ecf6" stroke="#24347a" stroke-width="1.100"/><path d="M1 14.500h14v-2.500l-5-1.500-9 2z" fill="#6f83c0" stroke="#24347a" stroke-width=".9"/></svg>
<span class="t " style="left:39px;top:468px;">条形基础(T)</span>
<div class="a" style="left:9px;top:489px;width:10px;height:1px;background-image:linear-gradient(90deg,#9a9a9a 50%,transparent 50%);background-size:2px 1px"></div>
<svg style="left:19px;top:481px" width="16" height="16" viewBox="0 0 16 16"><path d="M1 2.500h13.500v4H10.500v3h-5v-3H1z" fill="#8fb4f0" stroke="#1f3a8a" stroke-width="1.200"/><path d="M6.500 9.500h3v3.500L8 15.500 6.500 13z" fill="#5f83d0" stroke="#1f3a8a" stroke-width=".8"/></svg>
<div class="a" style="left:37px;top:482px;width:100px;height:16px;background:#e4e1d0"></div>
<span class="t " style="left:39px;top:484px;">桩承台(V)</span>
<div class="a" style="left:9px;top:505px;width:10px;height:1px;background-image:linear-gradient(90deg,#9a9a9a 50%,transparent 50%);background-size:2px 1px"></div>
<svg style="left:19px;top:497px" width="16" height="16" viewBox="0 0 16 16"><path d="M5 11V5l4-4 3 1v7z" fill="#5f7fd0" stroke="#24347a" stroke-width="1.100"/><path d="M1 14.500h14v-2.500l-5-1.500-9 2z" fill="#8fa8e0" stroke="#24347a" stroke-width=".9"/></svg>
<span class="t " style="left:39px;top:500px;">承台梁(F)</span>
<div class="a" style="left:9px;top:521px;width:10px;height:1px;background-image:linear-gradient(90deg,#9a9a9a 50%,transparent 50%);background-size:2px 1px"></div>
<svg style="left:19px;top:513px" width="16" height="16" viewBox="0 0 16 16"><path d="M6 1.500h4v8h2.500L8 15 3.500 9.500H6z" fill="#4f78d8" stroke="#1f3a8a" stroke-width="1"/></svg>
<span class="t " style="left:39px;top:516px;">桩 (U)</span>
<div class="a" style="left:9px;top:537px;width:10px;height:1px;background-image:linear-gradient(90deg,#9a9a9a 50%,transparent 50%);background-size:2px 1px"></div>
<svg style="left:19px;top:529px" width="16" height="16" viewBox="0 0 16 16"><path d="M1 4h14v2.500h-2.500v5H15V14H1v-2.500h2.500v-5H1z" fill="#8fa8e0" stroke="#24347a" stroke-width="1"/><path d="M6 6.500v5M10 6.500v5" stroke="#24347a"/></svg>
<span class="t " style="left:39px;top:532px;">基础板带(W)</span>
<svg style="left:0px;top:547px" width="15" height="13" viewBox="0 0 15 13"><path d="M.500 12.500V1.500h4.500l1.200 1.500H13.500v9.500z" fill="url(#gy)" stroke="#9a7a28" stroke-width=".8"/><path d="M1 4h12" stroke="#fbeeb8" stroke-width="1"/></svg>
<span class="t " style="left:21px;top:548px;">其它</span>
<svg style="left:0px;top:563px" width="15" height="13" viewBox="0 0 15 13"><path d="M.500 12.500V1.500h4.500l1.200 1.500H13.500v9.500z" fill="url(#gy)" stroke="#9a7a28" stroke-width=".8"/><path d="M1 4h12" stroke="#fbeeb8" stroke-width="1"/></svg>
<span class="t " style="left:21px;top:564px;">自定义</span>
<svg style="left:0px;top:579px" width="15" height="13" viewBox="0 0 15 13"><path d="M.500 12.500V1.500h4.500l1.200 1.500H13.500v9.500z" fill="url(#gy)" stroke="#9a7a28" stroke-width=".8"/><path d="M1 4h12" stroke="#fbeeb8" stroke-width="1"/></svg>
<span class="t " style="left:21px;top:580px;">CAD识别</span>
<div class="a" style="left:0;top:741px;width:139px;height:7px;background:#efede3;border-top:1px solid #9c9c94;border-right:1px solid #8d8b7b"></div>
<div class="a" style="left:143px;top:24px;width:263px;height:15px;background:linear-gradient(#ebe8d8,#e1decb);border:1px solid #8d8b7b"></div>
<span class="t " style="left:144px;top:25px;font-size:13px">构件列表</span>
<svg style="left:375px;top:27px" width="9" height="11" viewBox="0 0 9 11"><path d="M2.500 1h4v4.500M1 6h7M4.500 6v4.500" fill="none" stroke="#000" stroke-width="1.300"/><path d="M5.500 1v4.500" stroke="#000" stroke-width="2"/></svg>
<svg style="left:393px;top:28px" width="9" height="9" viewBox="0 0 9 9"><path d="M.500 .500l8 8M8.500 .500l-8 8" stroke="#222" stroke-width="1.100"/></svg>
<div class="a" style="left:143px;top:40px;width:263px;height:25px;background:linear-gradient(#fbfaf6,#ebe8da)"></div>
<svg style="left:149px;top:44px" width="17" height="17" viewBox="0 0 17 17"><path d="M2.500 .500h3v2.500h2.500v3H5.500v2.500h-3V6H0V3h2.500z" fill="#f4e24a" stroke="#8a7a14" stroke-width=".9"/><rect x="6.500" y="8" width="9.500" height="8" fill="#fff" stroke="#3f6fc8" stroke-width="1"/><rect x="6.500" y="8" width="9.500" height="2.500" fill="#5f8fe0"/><path d="M9.500 10.500v5.500M12.800 10.500v5.500M6.500 13.200h9.500" stroke="#8fb0e8" stroke-width=".8"/></svg>
<span class="t " style="left:169px;top:47px;">新建</span>
<i class="dd" style="left:196px;top:52px"></i>
<svg style="left:210px;top:46px" width="12" height="12" viewBox="0 0 12 12"><path d="M1 1l10 10M11 1L1 11" stroke="#2a2a2a" stroke-width="1.700"/></svg>
<svg style="left:231px;top:45px" width="16" height="14" viewBox="0 0 16 14"><path d="M.500 .500h6l2 2v7h-8z" fill="#e9f0fc" stroke="#5f86c8" stroke-width=".9"/><path d="M6.500 4h6l2.500 2.500v7h-8.500z" fill="#dfe9fb" stroke="#3f66b8" stroke-width=".9"/><path d="M8 8h5M8 10h5M8 12h5M2 3.500h3M2 5.500h3" stroke="#5f86c8" stroke-width=".8"/></svg>
<div class="a" style="left:145px;top:67px;width:236px;height:24px;background:#fff;border:1px solid #7f9db9;border-bottom:2px solid #8d9aa8"></div>
<span class="t " style="left:148px;top:71px;color:#9a9a9a">搜索构件...</span>
<svg style="left:386px;top:70px" width="15" height="16" viewBox="0 0 15 16"><circle cx="8.500" cy="6" r="4.300" fill="#eaf3fd" stroke="#5f9ce0" stroke-width="1.800"/><path d="M5.500 9.500l-4 4.500" stroke="#5f9ce0" stroke-width="2.400"/></svg>
<div class="a" style="left:144px;top:91px;width:262px;height:657px;background:#fff;border:1px solid #8d9aa8;border-right:2px solid #c4c1b0"></div>
<svg style="left:153px;top:98px" width="9" height="9" viewBox="0 0 9 9"><rect x=".5" y=".5" width="8" height="8" fill="#fff" stroke="#8a8a8a"/><path d="M2 4.500h5" stroke="#000"/></svg>
<div class="a" style="left:163px;top:102px;width:5px;height:1px;background-image:linear-gradient(90deg,#9a9a9a 50%,transparent 50%);background-size:2px 1px"></div>
<svg style="left:168px;top:94px" width="17" height="17" viewBox="0 0 17 17"><path d="M1 1.500h15v4.500H11v3.500H6V6H1z" fill="#8fb4f0" stroke="#1f3a8a" stroke-width="1.300"/><path d="M7 9.500h3v3.500L8.500 16 7 13z" fill="#4f73c8" stroke="#1f3a8a" stroke-width=".8"/><path d="M2.500 3h12" stroke="#dfeafc" stroke-width="1"/></svg>
<span class="t " style="left:189px;top:96px;">桩承台</span>
<div class="a" style="left:176px;top:111px;width:1px;height:3px;background-image:linear-gradient(#9a9a9a 50%,transparent 50%);background-size:1px 2px"></div>
<svg style="left:172px;top:114px" width="9" height="9" viewBox="0 0 9 9"><rect x=".5" y=".5" width="8" height="8" fill="#fff" stroke="#8a8a8a"/><path d="M2 4.500h5" stroke="#000"/></svg>
<div class="a" style="left:182px;top:118px;width:6px;height:1px;background-image:linear-gradient(90deg,#9a9a9a 50%,transparent 50%);background-size:2px 1px"></div>
<svg style="left:188px;top:112px" width="12" height="12" viewBox="0 0 12 12"><circle cx="6" cy="6" r="4.200" fill="#f2d64a" stroke="#6b5a10" stroke-width="1"/><circle cx="6" cy="6" r="1.500" fill="#fff" stroke="#6b5a10" stroke-width=".8"/><path d="M6 0v2M6 10v2M0 6h2M10 6h2M1.800 1.800l1.400 1.400M8.800 8.800l1.400 1.400M10.200 1.800L8.800 3.200M3.200 8.800l-1.400 1.400" stroke="#6b5a10" stroke-width="1.400"/></svg>
<span class="t " style="left:207px;top:111px;">CT-1</span>
<div class="a" style="left:195px;top:125px;width:1px;height:8px;background-image:linear-gradient(#9a9a9a 50%,transparent 50%);background-size:1px 2px"></div>
<div class="a" style="left:195px;top:133px;width:12px;height:1px;background-image:linear-gradient(90deg,#9a9a9a 50%,transparent 50%);background-size:2px 1px"></div>
<svg style="left:208px;top:127px" width="12" height="12" viewBox="0 0 12 12"><circle cx="6" cy="6" r="4.200" fill="#f2d64a" stroke="#6b5a10" stroke-width="1"/><circle cx="6" cy="6" r="1.500" fill="#fff" stroke="#6b5a10" stroke-width=".8"/><path d="M6 0v2M6 10v2M0 6h2M10 6h2M1.800 1.800l1.400 1.400M8.800 8.800l1.400 1.400M10.200 1.800L8.800 3.200M3.200 8.800l-1.400 1.400" stroke="#6b5a10" stroke-width="1.400"/></svg>
<div class="a" style="left:225px;top:126px;width:67px;height:15px;background:#3a6fcc"></div>
<span class="t " style="left:229px;top:127px;color:#00105a">(底)CT-1-1</span>
<div class="a" style="left:406px;top:21px;width:3px;height:727px;background:#ece9d8"></div>
<div class="a" style="left:409px;top:100px;width:888px;height:648px;background:#000;border-top:1px solid #6b6a63"></div>
<div class="a" style="left:683px;top:180px;width:60px;height:106px;background:#848400"></div>
<div class="a" style="left:567px;top:224px;width:116px;height:30px;background:#f2f200"></div>
<div class="a" style="left:551px;top:224px;width:16px;height:30px;background:#8000ff"></div>
<div class="a" style="left:559px;top:232px;width:170px;height:1px;background:#e02020"></div>
<div class="a" style="left:700px;top:507px;width:19px;height:9px;background:#f0e800"></div>
<div class="a" style="left:700px;top:516px;width:19px;height:17px;background:#00e000"></div>
<div class="a" style="left:699px;top:620px;width:21px;height:1px;background:#00a000"></div>
<div class="a" style="left:699px;top:726px;width:21px;height:1px;background:#00a000"></div>
<svg style="left:700px;top:700px" width="597" height="48" viewBox="700 700 597 48">
<g fill="none" stroke="#00b000" stroke-width="1"><circle cx="735" cy="748" r="13"/><path d="M735 728v7M806.500 728v20M911.500 728v7M898 742l13-13"/><circle cx="911.500" cy="748" r="13"/></g>
<text x="732" y="754" fill="#ddd" font-size="14" font-weight="bold" font-family="Liberation Sans, sans-serif">2</text>
<text x="908" y="754" fill="#ddd" font-size="14" font-weight="bold" font-family="Liberation Sans, sans-serif">3</text>
</svg>
<!-- ===== 配筋形式 dialog ===== -->
<div class="a" style="left:57px;top:238px;width:643px;height:504px;background:#0a56e0;border-radius:7px 7px 0 0;border:1px solid #0831c9;border-top-color:#2a6af0"></div>
<div class="a" style="left:58px;top:238px;width:641px;height:30px;border-radius:6px 6px 0 0;background:linear-gradient(#1a72f4 0%,#3c96ff 7%,#1268f0 17%,#0654e0 45%,#0551dc 70%,#0a62ea 88%,#0648c8 100%)"></div>
<svg style="left:64px;top:246px" width="15" height="15" viewBox="0 0 15 15"><rect width="15" height="15" rx="2" fill="#3d8cf0"/><path d="M7.500 2v11M2 7.500h11" stroke="#fff" stroke-width="1.300"/><ellipse cx="5" cy="6" rx="2.300" ry="1.600" fill="none" stroke="#fff" stroke-width="1.100"/><ellipse cx="10.500" cy="8.500" rx="2" ry="1.500" fill="none" stroke="#dff" stroke-width="1"/></svg>
<span class="t ttl" style="left:84px;top:247px;font-size:13px;line-height:16px;height:16px;color:#fff;letter-spacing:.9px;text-shadow:1px 1px 1px #0a2a8a">配筋形式</span>
<!-- title buttons -->
<div class="a" style="left:627px;top:244px;width:21px;height:21px;border:1px solid #8db4fa;border-radius:3px;background:linear-gradient(135deg,#4f8bf6,#2560e0 60%,#1a4cd0)"></div>
<div class="a" style="left:632px;top:257px;width:8px;height:3px;background:#8fb0f4"></div>
<div class="a" style="left:650px;top:244px;width:21px;height:21px;border:1px solid #fff;border-radius:3px;background:linear-gradient(135deg,#5f9bff,#2560e0 60%,#1a48c8)"></div>
<div class="a" style="left:655px;top:249px;width:11px;height:11px;border:1px solid #fff;border-top:3px solid #fff"></div>
<div class="a" style="left:673px;top:244px;width:21px;height:21px;border:1px solid #fff;border-radius:3px;background:linear-gradient(135deg,#f0a088,#d84a28 50%,#b83010)"></div>
<svg style="left:678px;top:249px" width="11" height="11" viewBox="0 0 11 11"><path d="M1 1l9 9M10 1l-9 9" stroke="#fff" stroke-width="2.200"/></svg>
<!-- client -->
<div class="a" style="left:61px;top:268px;width:635px;height:470px;background:#ece9d8"></div>
<!-- tiles -->
<div class="a" style="left:65px;top:269px;width:302px;height:27px;background:#000"></div>
<div class="a" style="left:372px;top:269px;width:302px;height:27px;background:#000"></div>
<div class="a" style="left:65px;top:301px;width:302px;height:205px;background:#000"></div>
<div class="a" style="left:371px;top:301px;width:303px;height:205px;background:#000;border:3px solid #e81818"></div>
<div class="a" style="left:65px;top:511px;width:302px;height:179px;background:#000"></div>
<!-- scrollbar -->
<div class="a" style="left:675px;top:269px;width:21px;height:423px;background:linear-gradient(90deg,#efece0,#fbfaf6 35%,#fefefc 55%,#f3f1e8)"></div>
<div class="a" style="left:679px;top:269px;width:15px;height:17px;background:linear-gradient(90deg,#c9d7fb,#b3c6f4);border:1px solid #fff;border-radius:2px"></div>
<svg style="left:682px;top:274px" width="9" height="6" viewBox="0 0 9 6"><path d="M1 5l3.500-3.500L8 5" fill="none" stroke="#4d6185" stroke-width="2"/></svg>
<div class="a" style="left:679px;top:468px;width:15px;height:193px;background:linear-gradient(90deg,#c9d7fb,#bccbf6 60%,#aebff0);border:1px solid #fff;border-radius:2px;box-shadow:0 0 0 1px #b6c4ea inset"></div>
<div class="a" style="left:683px;top:560px;width:7px;height:8px;background-image:linear-gradient(#8ea0cf 50%,transparent 50%);background-size:7px 2px"></div>
<div class="a" style="left:679px;top:674px;width:15px;height:17px;background:linear-gradient(90deg,#c9d7fb,#b3c6f4);border:1px solid #fff;border-radius:2px"></div>
<svg style="left:682px;top:680px" width="9" height="6" viewBox="0 0 9 6"><path d="M1 1l3.500 3.500L8 1" fill="none" stroke="#4d6185" stroke-width="2"/></svg>
<div class="a" style="left:61px;top:692px;width:635px;height:2px;border-top:1px solid #aca899;border-bottom:1px solid #fff"></div>
<!-- buttons -->
<div class="a" style="left:469px;top:703px;width:89px;height:25px;border:1px solid #003c74;border-radius:3px;background:linear-gradient(#fff,#f3f2ea 70%,#dcd8c8)"></div>
<span class="t" style="left:501px;top:710px">确定</span>
<div class="a" style="left:573px;top:703px;width:89px;height:25px;border:1px solid #003c74;border-radius:3px;background:linear-gradient(#fff,#f3f2ea 70%,#dcd8c8)"></div>
<span class="t" style="left:605px;top:710px">取消</span>
<svg style="left:0;top:0" width="1297" height="748" viewBox="0 0 1297 748" font-family="Liberation Sans, WenQuanYi Zen Hei, Noto Sans CJK SC, sans-serif">
<!-- top strip titles -->
<g fill="#fff" font-size="18" font-family="Liberation Sans, sans-serif" style="font-weight:300"><text x="203.500" y="287.500" letter-spacing="1.600">1-1</text><text x="500" y="287.500" letter-spacing="1.600">1-1</text></g>
<path d="M198 291.500h35M495.500 291.500h35" stroke="#fff" stroke-width="1"/>

<!-- ===== Tile C : 全部翻起 ===== -->
<g fill="none" stroke="#fff" stroke-width="1">
<path d="M212.500 307v43M232.500 307v43M207.500 307.500h10l1-3 2 6 1-3h13"/>
<path d="M128.500 349.500H311M128.500 345v24M310.500 345v24"/>
<path d="M123.500 349.500v47M119 349.500h8M119 396.500h8M120 353l6-5M120 399l6-5"/>
<path d="M128.500 363.500H144L164 396.500M142.500 396.500H274.500L296 363.500h15"/>
<path d="M128.500 355v2l-3 1 6 2-3 1v2M311 355v2l3 1-6 2 3 1v2"/>
<path d="M160.500 352v17.500M158 352.500h6M158 369.500h6"/>
<path d="M208.500 425.500V387.500H227.500V425.500M203 425.500h9l1-3 2 6 1-3h16"/>
<path d="M177.500 355.500V340.500H191.500"/>
<path d="M233.500 353l5.500-11M240 353l5.500-11M246.500 353l5.500-11M253 353l5.500-11M239 342h24.500"/>
<path d="M183.500 386.500V375.500H193"/>
<path d="M227 384.500l5.500-4M233.500 384.500l5.500-4M240 384.500l5.500-4M246 384.500l5.500-4M232.500 380.500h20"/>
<path d="M154 396.500a10 10 0 014.500-8.400"/>
<path d="M281 381l8-3M285 375l8-3M289 369l8-3M293.500 369.500h11"/>
<path d="M232.500 386.500v10M228 386.500h12"/>
</g>
<g fill="none" stroke="#dc2020" stroke-width="2.400">
<path d="M129 352h9.500L160 384.500H279.500L300 352h10.500"/>
<path d="M164 369V352.500H276.500V369" stroke-width="2.600"/>
<path d="M129 408.500h10.500L161 441.500H279L299.500 408.500H309.500"/>
</g>
<path d="M166 352h110M163 383.500h115" stroke="#fff" stroke-width="1" stroke-dasharray="1 5.500"/>
<g font-size="7.800" fill="#dcdcdc">
<text x="153" y="338.500">横向面筋</text><text x="234.500" y="338.500">纵向面筋</text><text x="169.500" y="373.500">横向底筋</text><text x="217.500" y="378.500">纵向底筋</text>
<text transform="translate(291.500,362.500) rotate(-55)" fill="#d0d0d0" letter-spacing=".4">节点设置</text>
</g>
<g font-size="6.500" fill="#20e030" font-weight="bold" font-family="Liberation Sans, sans-serif">
<text x="184" y="338.500">MMJ</text><text x="265.500" y="338.500">MMJ</text><text x="201" y="373.500">XDJ</text><text x="252" y="378.500">YDJ</text><text x="296" y="377.500">CMJ</text>
<text transform="translate(126,376) rotate(-90)">h</text><text transform="translate(157,366) rotate(-90)" font-size="6">MMZ</text><text transform="translate(150,395) rotate(-56)" font-size="6">FPJ</text><text transform="translate(242,398) rotate(-90)" font-size="5.500">ISZ</text>
</g>
<g fill="#fff"><text x="183" y="478" font-size="18.500" letter-spacing=".7" style="font-weight:300" font-family="Noto Sans CJK SC, WenQuanYi Zen Hei, sans-serif">全部翻起</text><text x="203" y="498" font-size="17" font-family="Liberation Sans, sans-serif" letter-spacing="1" style="font-weight:300">1-1</text></g>
<path d="M199 501.500h33" stroke="#fff"/>

<!-- ===== Tile E : 环式配筋承台 ===== -->
<path d="M93 627L122.500 567.500H199L169 627z" fill="none" stroke="#f0f000" stroke-width="1.600"/>
<path d="M190 567.500l4 5M194 567.500l4 5" stroke="#f0f000" stroke-width="1.400"/>
<rect x="107" y="578" width="78" height="42.500" fill="none" stroke="#f000f0" stroke-width="2"/>
<path d="M178 579l5 6M182 579l3 4" stroke="#f000f0" stroke-width="1.400"/>
<path d="M157.500 557.500V620L129.500 674.500V613.500z" fill="none" stroke="#00e8e8" stroke-width="1.600"/>
<path d="M129.500 611.500h9M131 616h8" stroke="#00e8e8" stroke-width="1.400"/>
<g fill="none" stroke="#fff" stroke-width="1">
<path d="M202.500 543v89M198 543h9M198 632h9M199 546l7-6M199 635l7-6"/>
<rect x="216.500" y="543.500" width="123.500" height="88.500"/>
<path d="M267.500 670.500V620.500H291.500V670.500M260 670.500h17l1.500-4 3 8 1.500-4h12"/>
<path d="M242.500 524.500V550M243 524.500h26"/>
<path d="M273 547l5-10M281 547l5-10M289 547l5-10M297 547l5-10M305 547l5-10M277 536.500h42"/>
<path d="M221 573l8-5M221 581l8-5M221 589l8-5M221 597l8-5M221 605l8-5M229.500 566v37"/>
<path d="M291.500 620.500h14M299.500 620.500v11"/>
</g>
<rect x="221" y="547.500" width="114" height="69.500" fill="none" stroke="#f000f0" stroke-width="1.800"/>
<path d="M327 549l6 7M331 549l3 4" stroke="#f000f0" stroke-width="1.400"/>
<path d="M224 547.500h108M224 617h108" stroke="#fff" stroke-dasharray="1 7" opacity=".7"/><path d="M335 552v60" stroke="#fff" stroke-dasharray="1 7" opacity=".7"/>
<g font-size="9" fill="#e8e8e8"><text x="229" y="523.500">横向钢筋</text><text x="279.500" y="534">纵向钢筋</text><text transform="translate(241,600) rotate(-90)">侧面钢筋</text></g>
<g font-size="8" fill="#00e000" font-weight="bold" font-family="Liberation Sans, sans-serif"><text x="268" y="523.500">XGJ</text><text x="318" y="534">YGJ</text><text transform="translate(254,598) rotate(-90)">CGJ</text><text transform="translate(309,634) rotate(-90)">ISC</text><text transform="translate(206,590) rotate(-90)">h</text></g>
<text x="137" y="682" font-size="19" font-weight="bold" fill="#fff" letter-spacing=".6" font-family="Noto Sans CJK SC, WenQuanYi Zen Hei, sans-serif">环式配筋承台</text>

<!-- ===== Tile D : 梁式配筋承台 ===== -->
<g fill="none" stroke="#fff" stroke-width="1">
<path d="M432.500 320.500H601M432.500 317v21.500M600.500 317v21.500"/>
<path d="M432.500 333.500H446L465 364.500H594.500"/>
<path d="M568.500 363L593 325.500h7.500"/>
<path d="M432.500 325v2l-3 1 6 2-3 1v2M600.500 325v2l3 1-6 2 3 1v2"/>
<path d="M462.500 323v32M459 323.500h7M459 338.500h7M459 354.500h7"/>
<path d="M478.500 327V312.500H490.500"/>
<path d="M469.500 341.500V349.500H474"/>
<path d="M506.500 356.500v26M523.500 356.500v26M501 382.500h10l1-3 2 6 1-3h12"/>
<path d="M493 353l6 14H511.500"/>
<path d="M578 364.500a9.500 9.500 0 00-6-10"/>
<path d="M574 347l7-3M578 341l7-3M582 335l7-3"/>
<!-- section 2 -->
<path d="M457.500 414.500H586.500M457.500 411v16.500M586.500 411v16.500"/>
<path d="M457.500 427.500H471.500L489 454.500M489 457.500H509M535.500 457.500H553L577 420.500h9"/>
<path d="M457.500 419v2l-3 1 6 2-3 1v2M586 419v2l3 1-6 2 3 1v2"/>
<path d="M512.500 449.500v26.500M530.500 449.500v26.500M507.500 476.500h10l1-3 2 6 1-3h11M512 449.500h18.500"/>
<path d="M531.500 439.500V408.500H541.500M529 432l5-4M529 440l5-4"/>
<path d="M476 438.500l8-3"/>
<path d="M489 453v8M509 453v8M486 460l6-5M506 460l6-5"/>
<path d="M535.500 451v9"/>
<path d="M560 444l7-3M564 438l7-3M568 432l7-3M572 435.500h10"/>
</g>
<path d="M452.500 414.500v43M448 414.500h9M448 457.500h9" fill="none" stroke="#fff" stroke-width="1.600"/>
<g fill="none" stroke="#e830e8" stroke-width="2">
<path d="M433.500 323.500H442L463.500 357h18M549 357h20L591 323.500h8"/>
<path d="M458 417.500H466.500L486.500 449.500h24M535.500 449.500H554.500L577 417.500h8.500" stroke-width="2.600"/>
</g>
<path d="M465 338.500V323.500H569V338.500" fill="none" stroke="#10e020" stroke-width="2"/>
<path d="M465 338.500V355H569V338.500" fill="none" stroke="#f0f000" stroke-width="1.800"/>
<path d="M466 331h102M466 336.200h102M466 341.300h102" stroke="#20e8f0" stroke-width="1.500"/>
<path d="M512 323.500v31M516.700 323.500v31M521.800 323.500v31M526.800 323.500v31M531.900 323.500v31M536.800 323.500v31" stroke="#d81c1c" stroke-width="1.800"/>
<path d="M510.500 350h28" stroke="#fff" stroke-width="1" stroke-dasharray="1.500 3.500"/>
<g fill="none" stroke="#e81818" stroke-width="1.800"><rect x="488" y="417" width="65.500" height="29.500"/><path d="M498.200 417v29.500M505.200 417v29.500M516.700 417v29.500M524.500 417v29.500M535.300 417v29.500M543 417v29.500M488 428.200h65.500M488 436.600h65.500"/>
<path d="M500 423l4-4M519 423l4-4M538 423l4-4M546 423l4-4M490 432l3 3M490 441l3 3M549 433l4-3M549 442l4-3"/></g>
<g fill="#40e060"><circle cx="489" cy="417" r=".9"/><circle cx="498.200" cy="417" r=".9"/><circle cx="505.200" cy="417" r=".9"/><circle cx="516.700" cy="417" r=".9"/><circle cx="524.500" cy="417" r=".9"/><circle cx="535.300" cy="417" r=".9"/><circle cx="543" cy="417" r=".9"/><circle cx="552.500" cy="417" r=".9"/><circle cx="489" cy="428.200" r=".9"/><circle cx="489" cy="436.600" r=".9"/><circle cx="552.500" cy="428.200" r=".9"/><circle cx="552.500" cy="436.600" r=".9"/></g>
<g fill="#f0f000"><circle cx="489" cy="446" r="1"/><circle cx="498.200" cy="446" r="1"/><circle cx="505.200" cy="446" r="1"/><circle cx="516.700" cy="446" r="1"/><circle cx="524.500" cy="446" r="1"/><circle cx="535.300" cy="446" r="1"/><circle cx="543" cy="446" r="1"/><circle cx="552.500" cy="446" r="1"/></g>
<g font-size="7.500" fill="#dcdcdc"><text x="458" y="311">上部筋</text><text x="474" y="350.500" font-size="6.500">侧面筋</text><text x="538.500" y="350.500" font-size="6.500">箍筋</text><text x="495" y="375">下部筋</text><text x="531.500" y="406.500" font-size="7">拉筋</text><text x="456.500" y="439">斜面筋</text>
<text transform="translate(582,332) rotate(-52)" fill="#d0d0d0">节点设置</text><text transform="translate(569.500,426) rotate(-54)" fill="#d0d0d0">节点设置</text></g>
<g font-size="6.500" fill="#20e030" font-weight="bold" font-family="Liberation Sans, sans-serif"><text x="482" y="311">SBJ</text><text x="493" y="350.500">CGJ</text><text x="550" y="350.500">GJ</text><text x="514" y="375">XBJ</text><text x="545" y="406.500">LJ</text><text x="458" y="445.500">XMJ</text><text x="573" y="440">XMSJ</text><text x="492" y="464">XWZ</text><text x="579" y="359.500">FPJ</text>
<text transform="translate(459.500,355) rotate(-90)" font-size="6">ZWJSJWZ</text><text transform="translate(543,458.500) rotate(-90)" font-size="5.500">ISZ</text><text transform="translate(451,438.500) rotate(-90)">h</text></g>
<g fill="#fff" font-family="Liberation Sans, sans-serif" font-size="14" letter-spacing="2" style="font-weight:300"><text x="501" y="401">1-1</text><text x="508" y="498">2-2</text></g>
<path d="M496 405.500h31.500M503 501.500h32" stroke="#fff"/>
<text x="536" y="490" font-size="13" letter-spacing="1" fill="#fff" font-family="Noto Sans CJK SC, WenQuanYi Zen Hei, sans-serif" style="font-weight:300">梁式配筋承台</text>
</svg>
<div class="a" style="left:719px;top:83px;width:554px;height:645px;background:#7b8fe0;border-radius:4px 4px 0 0"></div>
<div class="a" style="left:719px;top:83px;width:554px;height:23px;border-radius:4px 4px 0 0;background:linear-gradient(#8ba4ee 0%,#6f8fe2 15%,#6585dc 50%,#7494e4 85%,#6a86d8 100%)"></div>
<span class="t ttl" style="left:723px;top:88px;font-size:13px;color:#d5e0f8;letter-spacing:-.2px;line-height:16px;height:16px">属性编辑器</span>
<div class="a" style="left:1254px;top:89px;width:13px;height:13px;border:1px solid #f0e0ec;border-radius:2px;background:#c0708a"></div>
<svg style="left:1257px;top:92px" width="7" height="7" viewBox="0 0 7 7"><path d="M.500 .500l6 6M6.500 .500l-6 6" stroke="#fff" stroke-width="1.700"/></svg>
<div class="a" style="left:723px;top:106px;width:546px;height:254px;background:#fff"></div>
<div class="a" style="left:723px;top:360px;width:546px;height:38px;background:#ece9d8;border-top:1px solid #96968e;box-shadow:inset 0 3px 0 #fdfdfb,inset 2px 0 0 #fdfdfb"></div>
<div class="a" style="left:723px;top:398px;width:546px;height:281px;background:#000"></div>
<div class="a" style="left:723px;top:679px;width:546px;height:44px;background:#ece9d8;box-shadow:inset 0 2px 0 #fdfdfb,inset 2px 0 0 #fdfdfb"></div>
<div class="a" style="left:724px;top:106px;width:22px;height:24px;background:linear-gradient(#fbfaf6,#f1efe4 60%,#e6e3d3);border-right:1px solid #c9c7ba;border-bottom:1px solid #c9c7ba"></div>
<div class="a" style="left:746px;top:106px;width:120px;height:24px;background:linear-gradient(#fbfaf6,#f1efe4 60%,#e6e3d3);border-right:1px solid #c9c7ba;border-bottom:1px solid #c9c7ba"></div>
<div class="a" style="left:866px;top:106px;width:370px;height:24px;background:linear-gradient(#fde3b4,#f9cf84 45%,#f5bd5c);border-right:1px solid #d8b26a;border-bottom:1px solid #d8b26a"></div>
<div class="a" style="left:1236px;top:106px;width:31px;height:24px;background:linear-gradient(#fbfaf6,#f1efe4 60%,#e6e3d3);border-right:1px solid #c9c7ba;border-bottom:1px solid #c9c7ba"></div>
<span class="t" style="left:782px;top:112px;">属性名称</span>
<span class="t" style="left:1033px;top:112px;color:#5c1530">属性值</span>
<span class="t" style="left:1239px;top:112px;">附加</span>
<div class="a" style="left:724px;top:130px;width:22px;height:19px;background:linear-gradient(#fbe6bc,#f7cc80);border-right:1px solid #c9c7ba;border-bottom:1px solid #c9c7ba"></div>
<div class="a" style="left:746px;top:130px;width:120px;height:19px;background:#316ac5;border-right:1px solid #c0c0c0;border-bottom:1px solid #c0c0c0"></div>
<div class="a" style="left:866px;top:130px;width:370px;height:19px;background:#dce6f4;border-right:1px solid #c0c0c0;border-bottom:1px solid #c0c0c0"></div>
<div class="a" style="left:1236px;top:130px;width:31px;height:19px;background:#fff;border-right:1px solid #c0c0c0;border-bottom:1px solid #c0c0c0"></div>
<span class="t" style="left:732px;top:133px;">1</span>
<span class="t" style="left:765px;top:134px;color:#fff">名称</span>
<span class="t" style="left:869px;top:133px;color:#000">CT-1-1</span>
<div class="a" style="left:724px;top:149px;width:22px;height:19px;background:linear-gradient(#fbfaf6,#f1efe4 60%,#e6e3d3);border-right:1px solid #c9c7ba;border-bottom:1px solid #c9c7ba"></div>
<div class="a" style="left:746px;top:149px;width:120px;height:19px;background:#fff;border-right:1px solid #c0c0c0;border-bottom:1px solid #c0c0c0"></div>
<div class="a" style="left:866px;top:149px;width:370px;height:19px;background:#fff;border-right:1px solid #c0c0c0;border-bottom:1px solid #c0c0c0"></div>
<div class="a" style="left:1236px;top:149px;width:31px;height:19px;background:#fff;border-right:1px solid #c0c0c0;border-bottom:1px solid #c0c0c0"></div>
<span class="t" style="left:732px;top:152px;">2</span>
<span class="t" style="left:765px;top:153px;color:#000">截面形状</span>
<span class="t" style="left:869px;top:153px;color:#000">矩形承台</span>
<div class="a" style="left:1245px;top:152px;width:13px;height:13px;border:1px solid #1c5180;background:linear-gradient(135deg,#dcdcd7,#fff)"></div>
<div class="a" style="left:724px;top:168px;width:22px;height:19px;background:linear-gradient(#fbfaf6,#f1efe4 60%,#e6e3d3);border-right:1px solid #c9c7ba;border-bottom:1px solid #c9c7ba"></div>
<div class="a" style="left:746px;top:168px;width:120px;height:19px;background:#fff;border-right:1px solid #c0c0c0;border-bottom:1px solid #c0c0c0"></div>
<div class="a" style="left:866px;top:168px;width:370px;height:19px;background:#fff;border-right:1px solid #c0c0c0;border-bottom:1px solid #c0c0c0"></div>
<div class="a" style="left:1236px;top:168px;width:31px;height:19px;background:#fff;border-right:1px solid #c0c0c0;border-bottom:1px solid #c0c0c0"></div>
<span class="t" style="left:732px;top:171px;">3</span>
<span class="t" style="left:765px;top:172px;color:#808080">长度(mm)</span>
<span class="t" style="left:869px;top:171px;color:#808080">1500</span>
<div class="a" style="left:1245px;top:171px;width:13px;height:13px;border:1px solid #1c5180;background:linear-gradient(135deg,#dcdcd7,#fff)"></div>
<div class="a" style="left:724px;top:187px;width:22px;height:19px;background:linear-gradient(#fbfaf6,#f1efe4 60%,#e6e3d3);border-right:1px solid #c9c7ba;border-bottom:1px solid #c9c7ba"></div>
<div class="a" style="left:746px;top:187px;width:120px;height:19px;background:#fff;border-right:1px solid #c0c0c0;border-bottom:1px solid #c0c0c0"></div>
<div class="a" style="left:866px;top:187px;width:370px;height:19px;background:#fff;border-right:1px solid #c0c0c0;border-bottom:1px solid #c0c0c0"></div>
<div class="a" style="left:1236px;top:187px;width:31px;height:19px;background:#fff;border-right:1px solid #c0c0c0;border-bottom:1px solid #c0c0c0"></div>
<span class="t" style="left:732px;top:190px;">4</span>
<span class="t" style="left:765px;top:191px;color:#808080">宽度(mm)</span>
<span class="t" style="left:869px;top:190px;color:#808080">1500</span>
<div class="a" style="left:1245px;top:190px;width:13px;height:13px;border:1px solid #1c5180;background:linear-gradient(135deg,#dcdcd7,#fff)"></div>
<div class="a" style="left:724px;top:206px;width:22px;height:19px;background:linear-gradient(#fbfaf6,#f1efe4 60%,#e6e3d3);border-right:1px solid #c9c7ba;border-bottom:1px solid #c9c7ba"></div>
<div class="a" style="left:746px;top:206px;width:120px;height:19px;background:#fff;border-right:1px solid #c0c0c0;border-bottom:1px solid #c0c0c0"></div>
<div class="a" style="left:866px;top:206px;width:370px;height:19px;background:#fff;border-right:1px solid #c0c0c0;border-bottom:1px solid #c0c0c0"></div>
<div class="a" style="left:1236px;top:206px;width:31px;height:19px;background:#fff;border-right:1px solid #c0c0c0;border-bottom:1px solid #c0c0c0"></div>
<span class="t" style="left:732px;top:209px;">5</span>
<span class="t" style="left:765px;top:210px;color:#808080">高度(mm)</span>
<span class="t" style="left:869px;top:209px;color:#808080">500</span>
<div class="a" style="left:1245px;top:209px;width:13px;height:13px;border:1px solid #1c5180;background:linear-gradient(135deg,#dcdcd7,#fff)"></div>
<div class="a" style="left:724px;top:225px;width:22px;height:19px;background:linear-gradient(#fbfaf6,#f1efe4 60%,#e6e3d3);border-right:1px solid #c9c7ba;border-bottom:1px solid #c9c7ba"></div>
<div class="a" style="left:746px;top:225px;width:120px;height:19px;background:#fff;border-right:1px solid #c0c0c0;border-bottom:1px solid #c0c0c0"></div>
<div class="a" style="left:866px;top:225px;width:370px;height:19px;background:#fff;border-right:1px solid #c0c0c0;border-bottom:1px solid #c0c0c0"></div>
<div class="a" style="left:1236px;top:225px;width:31px;height:19px;background:#fff;border-right:1px solid #c0c0c0;border-bottom:1px solid #c0c0c0"></div>
<span class="t" style="left:732px;top:228px;">6</span>
<span class="t" style="left:765px;top:229px;color:#000">相对底标高(m)</span>
<span class="t" style="left:871px;top:228px;color:#000">(0)</span>
<div class="a" style="left:1245px;top:228px;width:13px;height:13px;border:1px solid #1c5180;background:linear-gradient(135deg,#dcdcd7,#fff)"></div>
<div class="a" style="left:724px;top:244px;width:22px;height:19px;background:linear-gradient(#fbfaf6,#f1efe4 60%,#e6e3d3);border-right:1px solid #c9c7ba;border-bottom:1px solid #c9c7ba"></div>
<div class="a" style="left:746px;top:244px;width:120px;height:19px;background:#fff;border-right:1px solid #c0c0c0;border-bottom:1px solid #c0c0c0"></div>
<div class="a" style="left:866px;top:244px;width:370px;height:19px;background:#fff;border-right:1px solid #c0c0c0;border-bottom:1px solid #c0c0c0"></div>
<div class="a" style="left:1236px;top:244px;width:31px;height:19px;background:#fff;border-right:1px solid #c0c0c0;border-bottom:1px solid #c0c0c0"></div>
<span class="t" style="left:732px;top:247px;">7</span>
<span class="t" style="left:765px;top:248px;color:#0000c0">其它钢筋</span>
<div class="a" style="left:724px;top:263px;width:22px;height:19px;background:linear-gradient(#fbfaf6,#f1efe4 60%,#e6e3d3);border-right:1px solid #c9c7ba;border-bottom:1px solid #c9c7ba"></div>
<div class="a" style="left:746px;top:263px;width:120px;height:19px;background:#fff;border-right:1px solid #c0c0c0;border-bottom:1px solid #c0c0c0"></div>
<div class="a" style="left:866px;top:263px;width:370px;height:19px;background:#fff;border-right:1px solid #c0c0c0;border-bottom:1px solid #c0c0c0"></div>
<div class="a" style="left:1236px;top:263px;width:31px;height:19px;background:#fff;border-right:1px solid #c0c0c0;border-bottom:1px solid #c0c0c0"></div>
<span class="t" style="left:732px;top:266px;">8</span>
<span class="t" style="left:765px;top:267px;color:#000">承台单边加强筋</span>
<div class="a" style="left:1245px;top:266px;width:13px;height:13px;border:1px solid #1c5180;background:linear-gradient(135deg,#dcdcd7,#fff)"></div>
<div class="a" style="left:724px;top:282px;width:22px;height:19px;background:linear-gradient(#fbfaf6,#f1efe4 60%,#e6e3d3);border-right:1px solid #c9c7ba;border-bottom:1px solid #c9c7ba"></div>
<div class="a" style="left:746px;top:282px;width:120px;height:19px;background:#fff;border-right:1px solid #c0c0c0;border-bottom:1px solid #c0c0c0"></div>
<div class="a" style="left:866px;top:282px;width:370px;height:19px;background:#fff;border-right:1px solid #c0c0c0;border-bottom:1px solid #c0c0c0"></div>
<div class="a" style="left:1236px;top:282px;width:31px;height:19px;background:#fff;border-right:1px solid #c0c0c0;border-bottom:1px solid #c0c0c0"></div>
<span class="t" style="left:732px;top:285px;">9</span>
<span class="t" style="left:765px;top:286px;color:#000">加强筋起步(mm)</span>
<span class="t" style="left:869px;top:285px;color:#000">40</span>
<div class="a" style="left:1245px;top:285px;width:13px;height:13px;border:1px solid #1c5180;background:linear-gradient(135deg,#dcdcd7,#fff)"></div>
<div class="a" style="left:724px;top:301px;width:22px;height:19px;background:linear-gradient(#fbfaf6,#f1efe4 60%,#e6e3d3);border-right:1px solid #c9c7ba;border-bottom:1px solid #c9c7ba"></div>
<div class="a" style="left:746px;top:301px;width:120px;height:19px;background:#fff;border-right:1px solid #c0c0c0;border-bottom:1px solid #c0c0c0"></div>
<div class="a" style="left:866px;top:301px;width:370px;height:19px;background:#fff;border-right:1px solid #c0c0c0;border-bottom:1px solid #c0c0c0"></div>
<div class="a" style="left:1236px;top:301px;width:31px;height:19px;background:#fff;border-right:1px solid #c0c0c0;border-bottom:1px solid #c0c0c0"></div>
<span class="t" style="left:728px;top:304px;">10</span>
<span class="t" style="left:765px;top:305px;color:#000">备注</span>
<div class="a" style="left:1245px;top:304px;width:13px;height:13px;border:1px solid #1c5180;background:linear-gradient(135deg,#dcdcd7,#fff)"></div>
<div class="a" style="left:724px;top:320px;width:22px;height:19px;background:linear-gradient(#fbfaf6,#f1efe4 60%,#e6e3d3);border-right:1px solid #c9c7ba;border-bottom:1px solid #c9c7ba"></div>
<div class="a" style="left:746px;top:320px;width:120px;height:19px;background:#fff;border-right:1px solid #c0c0c0;border-bottom:1px solid #c0c0c0"></div>
<div class="a" style="left:866px;top:320px;width:370px;height:19px;background:#fff;border-right:1px solid #c0c0c0;border-bottom:1px solid #c0c0c0"></div>
<div class="a" style="left:1236px;top:320px;width:31px;height:19px;background:#fff;border-right:1px solid #c0c0c0;border-bottom:1px solid #c0c0c0"></div>
<span class="t" style="left:728px;top:323px;">11</span>
<span class="t" style="left:765px;top:324px;color:#808080">锚固搭接</span>
<svg style="left:749px;top:325px" width="11" height="11" viewBox="0 0 11 11"><rect x=".5" y=".5" width="10" height="10" fill="#fff" stroke="#9a9a9a"/><path d="M2.500 5.500h6M5.500 2.500v6" stroke="#000"/></svg>
<div class="a" style="left:805px;top:374px;width:13px;height:13px;border:1px solid #1c5180;border-radius:50%;background:radial-gradient(circle at 40% 40%,#fff,#dcdcd4)"></div>
<div class="a" style="left:809px;top:378px;width:5px;height:5px;border-radius:50%;background:#21a121"></div>
<span class="t" style="left:821px;top:375px;">角度放坡形式</span>
<div class="a" style="left:1024px;top:374px;width:13px;height:13px;border:1px solid #1c5180;border-radius:50%;background:radial-gradient(circle at 40% 40%,#fff,#dcdcd4)"></div>
<span class="t" style="left:1040px;top:375px;">底宽放坡形式</span>
<div class="a" style="left:1170px;top:691px;width:73px;height:23px;border:1px solid #003c74;border-radius:3px;background:linear-gradient(#fff,#f3f2ea 70%,#dcd8c8);box-shadow:inset 0 0 0 2px #a9c1f0"></div>
<span class="t" style="left:1182px;top:695px;">配筋形式</span>
<svg style="left:0;top:0" width="1297" height="748" viewBox="0 0 1297 748" font-family="Liberation Sans, WenQuanYi Zen Hei, Noto Sans CJK SC, sans-serif">
<defs><clipPath id="pv"><rect x="723" y="398" width="546" height="281"/></clipPath></defs>
<g clip-path="url(#pv)">
<!-- plan view -->
<g fill="none" stroke="#fff" stroke-width="1">
<path d="M744.500 443v38M723 485.500H870.500V643.500H723M870.500 593.500H901"/>
<rect x="722.500" y="537.500" width="32" height="45"/>
<path d="M723 552l14-14M723 566l28-28M723 580l31.500-31.500M732 582l22.500-22.500M746 582l8.500-8.500"/>
<circle cx="811" cy="562" r="27.800"/>
<path d="M750 659.500H873M870.500 655v9M867 663l7-7M744.500 671v8"/>
</g>
<text x="719" y="476.500" font-family="Liberation Serif, serif" font-size="28" fill="#fff">2</text>
<text x="880" y="590.500" font-family="Liberation Serif, serif" font-size="29" fill="#fff">1</text>
<text x="724" y="664" font-size="11" fill="#30d030" font-family="Liberation Sans, sans-serif">1500</text>

<!-- section 1-1 -->
<g fill="none" stroke="#fff" stroke-width="1">
<path d="M915.500 416.500H1220M915.500 409v40M1219.500 409v40"/>
<path d="M915.500 423v3l-4 1.500 8 2.500-4 1.500v3M1219.500 423v3l4 1.500-8 2.500 4 1.500v3"/>
<path d="M915.500 439.500H940L976 494.500H1209"/>
<path d="M1220 427.500H1204L1158 494.500M1194 439.500h26"/>
<path d="M969.500 421v58M966 421.500h10M966 450.500h10M966 478.500h10M967 424l6-5M967 453l6-5M967 481l6-5"/>
<path d="M998.500 401v26.500M998.500 401.500H1020"/>
<path d="M983.500 455.500V467.500H989M980 433l8 5M980 442l8 5M980 451l8 5M984 430v28"/>
<path d="M1024.500 475l13.500 26.500"/>
<path d="M1049.500 480.500V527M1080.500 480.500V527M1040 527.500h21l2-5 4 10 2-5h18"/>
<path d="M1056 467l8 9M1066 467l8 9M1084 467l8 9M1093 467l8 9M1102 467l8 9M1056 471.500h52"/>
<path d="M1179.500 494.500a16.500 16.500 0 00-7-13.500"/>
<path d="M1032 568.500h57"/>
</g>
<path d="M917.500 421H933L971.500 480.500H1007M1128.500 480.500H1164.500M1178 455.500L1201 421.500h15" fill="none" stroke="#f000f0" stroke-width="2"/>
<g fill="#60e0f0"><circle cx="1177.500" cy="453" r="1"/><circle cx="1181" cy="447.500" r="1"/><circle cx="1184.500" cy="442" r="1"/></g>
<path d="M976 450.500V421.500H1163V450.500" fill="none" stroke="#00e000" stroke-width="2"/>
<path d="M976 450.500V478.500H1163V450.500" fill="none" stroke="#f0f000" stroke-width="1.800"/>
<path d="M977 435.500h185M977 444.500h185M977 453.500h185" stroke="#00e8e8" stroke-width="1.600"/>
<path d="M1059.500 421.500v57M1069 421.500v57M1078 421.500v57M1087 421.500v57M1097 421.500v57M1106 421.500v57" stroke="#e81818" stroke-width="1.800"/>
<g font-size="12" fill="#fff"><text x="989" y="468">侧面筋</text><text x="1106.500" y="470">箍筋</text><text x="1025" y="513">下部筋</text>
<text transform="translate(1184,438) rotate(-52)" font-size="12" letter-spacing="1.500">节点设置</text></g>
<g font-size="11" fill="#30d030" font-family="Liberation Sans, sans-serif" letter-spacing=".4"><text x="1026" y="467.500">C12@200</text><text x="1131" y="469.500">C12@100(6)</text><text x="1064.500" y="513">16C32</text><text x="1180" y="485">90</text>
<text transform="translate(964,437) rotate(-90)">0</text><text transform="translate(964,477) rotate(-90)">15*d</text></g>
<text x="1037" y="563" font-family="Liberation Serif, serif" font-size="32" fill="#fff" letter-spacing="3.500">1-1</text>

<!-- section 2-2 -->
<g fill="none" stroke="#fff" stroke-width="1">
<path d="M961.500 584.500H1195.500"/>
<path d="M950.500 584.500v79M946 584.500h9M946 663.500h9M947 588l7-6M947 667l7-6"/>
<path d="M961.500 578v31M961.500 609H988L1018 660"/>
<path d="M961.500 591v3l-4 1.500 8 3-4 1.500v3M1195.500 588v3l4 1.500-8 3 4 1.500v3"/>
<path d="M1195.500 578v31M1195.500 594H1178.500L1135 662.500H1102M1168 609h27.500M1168 616.500h17"/>
<path d="M1095.500 573V631M1095.500 573.500h36M1092 612l7-6M1092 627l7-6"/>
<path d="M996.500 630.500l9-4.500"/>
<path d="M1017.500 655v12M1054.500 655v12M1013 659.500H1058M1014 663l7-7M1051 663l7-7"/>
<path d="M1060.500 680V649.500H1092.500V680"/>
<path d="M1102.500 645v20M1099 644.500h8M1099 662.500h8"/>
<path d="M1146 632l9-3M1150 625l9-3M1154 618l9-3M1158 611l9-3"/>
</g>
<path d="M964.500 589.500H984L1017.500 650H1054M1101 650H1137L1174 589.500h17" fill="none" stroke="#d838e8" stroke-width="2.200"/>
<g fill="none" stroke="#e81818" stroke-width="2"><rect x="1017.500" y="590" width="120.500" height="54.500"/><path d="M1035 590v54.500M1051.500 590v54.500M1068 590v54.500M1084.500 590v54.500M1102 590v54.500M1120 590v54.500M1017.500 610h120.500M1017.500 625.500h120.500"/>
<path d="M1041 600l7-8M1077 600l7-8M1109 600l7-8M1128 600l7-8M1019 616l7 6M1019 632l7 6M1129 622l7-6M1129 638l7-6"/></g>
<g fill="#30e060"><circle cx="1019" cy="590" r="1.100"/><circle cx="1035" cy="590" r="1.100"/><circle cx="1051.500" cy="590" r="1.100"/><circle cx="1068" cy="590" r="1.100"/><circle cx="1084.500" cy="590" r="1.100"/><circle cx="1102" cy="590" r="1.100"/><circle cx="1120" cy="590" r="1.100"/><circle cx="1136" cy="590" r="1.100"/></g>
<g fill="#f0f000"><circle cx="1019" cy="644" r="1.100"/><circle cx="1035" cy="644" r="1.100"/><circle cx="1051.500" cy="644" r="1.100"/><circle cx="1068" cy="644" r="1.100"/><circle cx="1084.500" cy="644" r="1.100"/><circle cx="1102" cy="644" r="1.100"/><circle cx="1120" cy="644" r="1.100"/><circle cx="1136" cy="644" r="1.100"/></g>
<g fill="#60e0f0"><circle cx="1019" cy="610" r="1.100"/><circle cx="1019" cy="625.500" r="1.100"/><circle cx="1136" cy="610" r="1.100"/><circle cx="1136" cy="625.500" r="1.100"/><circle cx="1157" cy="623" r="1"/><circle cx="1152.500" cy="630" r="1"/><circle cx="1148" cy="637" r="1"/><circle cx="1143.500" cy="644" r="1"/></g>
<g font-size="12" fill="#fff"><text x="1095.500" y="571.500">拉筋</text><text x="958.500" y="629">斜面筋</text><text transform="translate(1160,606) rotate(-54)" font-size="12" letter-spacing="1.500">节点设置</text></g>
<g font-size="11" fill="#30d030" font-family="Liberation Sans, sans-serif" letter-spacing=".4"><text x="1120" y="571.500">LJ</text><text x="963" y="642">XMJ</text><text x="1169" y="631">XMSJ</text><text x="1024.500" y="675.500">XWZ</text>
<text transform="translate(955,634.500) rotate(-90)">500</text><text transform="translate(1116,663.500) rotate(-90)">100</text></g>
</g>
</svg>
<svg style="left:0;top:0" width="1297" height="748" viewBox="0 0 1297 748">
<polygon fill="#f03434" points="273.0,132.4 849.5,144.6 849.4,146.8 859.0,142.7 849.6,138.3 849.5,140.4 273.0,131.6"/>
<polygon fill="#f03434" points="631.9,411.4 943.2,456.8 942.9,459.5 952.5,455.5 944.3,449.1 943.9,451.7 632.1,410.6"/>
<polygon fill="#f03434" points="1222.1,695.7 644.1,441.3 645.3,438.7 632.5,438.0 641.7,446.9 642.9,444.3 1221.9,696.3"/>
<polygon fill="#f03434" points="862.2,147.2 1215.6,689.4 1213.8,690.6 1223.0,696.5 1221.3,685.7 1219.4,686.9 862.8,146.8"/>
<polygon fill="#f03434" points="1020.7,228.7 1167.5,477.9 1165.7,479.0 1174.0,484.5 1173.0,474.6 1171.3,475.6 1021.3,228.3"/>
<ellipse cx="1189" cy="493.500" rx="29.500" ry="26.300" fill="none" stroke="#f2e81e" stroke-width="7"/>
</svg>
<span class="t" style="left:917px;top:208px;font-size:19px;line-height:24px;height:24px;color:#e8383c;font-family:'Liberation Sans','Noto Sans CJK SC','WenQuanYi Zen Hei',sans-serif;font-weight:300">注意设置为<b style="font-weight:bold">90</b>度，就是矩形的不放坡了</span>
<!-- IME indicator -->
<div class="a" style="left:1259px;top:719px;width:44px;height:25px;background:#f4f7fd;border:2px solid #c3d2ee;border-radius:4px"></div>
<div class="a" style="left:1269px;top:723px;width:16px;height:16px;border:1px solid #7a8cac;background:linear-gradient(135deg,#eef2fa,#b9c6dc)"></div>
<span class="t" style="left:1273px;top:724px;font-weight:bold;font-size:11px;color:#3d5a86;font-family:'Liberation Sans',sans-serif">Q</span>
<span class="t" style="left:1291px;top:724px;font-weight:bold;color:#3d5a86;font-size:13px">中</span>
</body>
</html>
